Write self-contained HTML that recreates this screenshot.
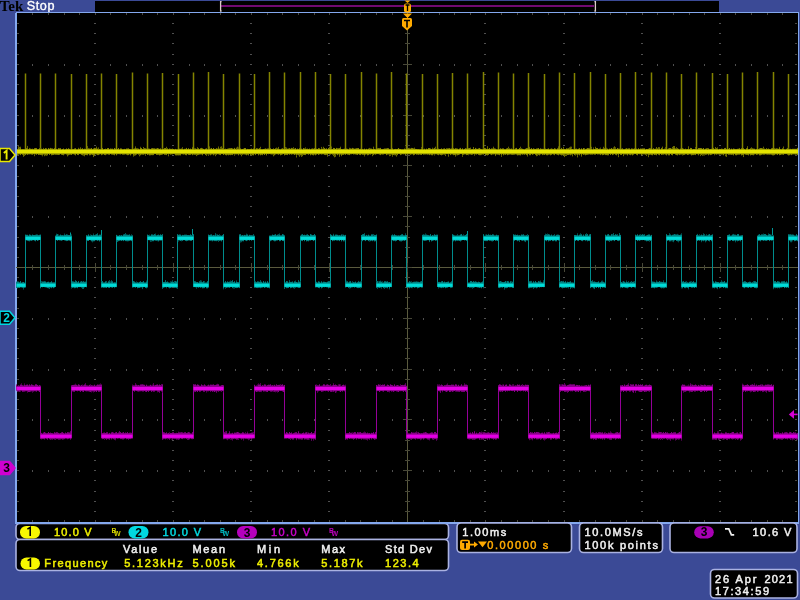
<!DOCTYPE html><html><head><meta charset="utf-8"><style>html,body{margin:0;padding:0;background:#3b4a96;width:800px;height:600px;overflow:hidden}svg{display:block}text{font-family:"Liberation Sans",sans-serif}</style></head><body>
<svg width="800" height="600" viewBox="0 0 800 600" shape-rendering="crispEdges" style="will-change:transform">
<rect x="0" y="0" width="800" height="600" fill="#3b4a96"/>
<rect x="95" y="1" width="624" height="11" fill="#000"/>
<rect x="221" y="5" width="373" height="2" fill="#720a72"/>
<path d="M221.6 1.6 H220.6 V11 H221.6" stroke="#dccccc" stroke-width="1.3" fill="none" shape-rendering="auto"/>
<path d="M594.4 1.6 H595.4 V11 H594.4" stroke="#dccccc" stroke-width="1.3" fill="none" shape-rendering="auto"/>
<text x="-0.3" y="11.3" font-weight="bold" font-size="14.8" fill="#000" textLength="23.5" lengthAdjust="spacingAndGlyphs" style="font-family:'Liberation Serif',serif">Tek</text>
<text x="26.8" y="9.9" font-size="12.6" fill="#fff" stroke="#fff" stroke-width="0.35" textLength="27.6" lengthAdjust="spacing">Stop</text>
<rect x="15" y="12" width="784" height="512" rx="2" fill="#84a8ee"/>
<rect x="16.5" y="13" width="781" height="509" fill="#000"/>
<path d="M94 23h2v1h-2zM94 33h2v1h-2zM94 43h2v1h-2zM94 54h2v1h-2zM94 64h2v1h-2zM94 74h2v1h-2zM94 84h2v1h-2zM94 94h2v1h-2zM94 104h2v1h-2zM94 115h2v1h-2zM94 125h2v1h-2zM94 135h2v1h-2zM94 145h2v1h-2zM94 155h2v1h-2zM94 165h2v1h-2zM94 176h2v1h-2zM94 186h2v1h-2zM94 196h2v1h-2zM94 206h2v1h-2zM94 216h2v1h-2zM94 226h2v1h-2zM94 237h2v1h-2zM94 247h2v1h-2zM94 257h2v1h-2zM94 267h2v1h-2zM94 277h2v1h-2zM94 287h2v1h-2zM94 297h2v1h-2zM94 308h2v1h-2zM94 318h2v1h-2zM94 328h2v1h-2zM94 338h2v1h-2zM94 348h2v1h-2zM94 358h2v1h-2zM94 369h2v1h-2zM94 379h2v1h-2zM94 389h2v1h-2zM94 399h2v1h-2zM94 409h2v1h-2zM94 419h2v1h-2zM94 430h2v1h-2zM94 440h2v1h-2zM94 450h2v1h-2zM94 460h2v1h-2zM94 470h2v1h-2zM94 480h2v1h-2zM94 491h2v1h-2zM94 501h2v1h-2zM94 511h2v1h-2zM172 23h2v1h-2zM172 33h2v1h-2zM172 43h2v1h-2zM172 54h2v1h-2zM172 64h2v1h-2zM172 74h2v1h-2zM172 84h2v1h-2zM172 94h2v1h-2zM172 104h2v1h-2zM172 115h2v1h-2zM172 125h2v1h-2zM172 135h2v1h-2zM172 145h2v1h-2zM172 155h2v1h-2zM172 165h2v1h-2zM172 176h2v1h-2zM172 186h2v1h-2zM172 196h2v1h-2zM172 206h2v1h-2zM172 216h2v1h-2zM172 226h2v1h-2zM172 237h2v1h-2zM172 247h2v1h-2zM172 257h2v1h-2zM172 267h2v1h-2zM172 277h2v1h-2zM172 287h2v1h-2zM172 297h2v1h-2zM172 308h2v1h-2zM172 318h2v1h-2zM172 328h2v1h-2zM172 338h2v1h-2zM172 348h2v1h-2zM172 358h2v1h-2zM172 369h2v1h-2zM172 379h2v1h-2zM172 389h2v1h-2zM172 399h2v1h-2zM172 409h2v1h-2zM172 419h2v1h-2zM172 430h2v1h-2zM172 440h2v1h-2zM172 450h2v1h-2zM172 460h2v1h-2zM172 470h2v1h-2zM172 480h2v1h-2zM172 491h2v1h-2zM172 501h2v1h-2zM172 511h2v1h-2zM250 23h2v1h-2zM250 33h2v1h-2zM250 43h2v1h-2zM250 54h2v1h-2zM250 64h2v1h-2zM250 74h2v1h-2zM250 84h2v1h-2zM250 94h2v1h-2zM250 104h2v1h-2zM250 115h2v1h-2zM250 125h2v1h-2zM250 135h2v1h-2zM250 145h2v1h-2zM250 155h2v1h-2zM250 165h2v1h-2zM250 176h2v1h-2zM250 186h2v1h-2zM250 196h2v1h-2zM250 206h2v1h-2zM250 216h2v1h-2zM250 226h2v1h-2zM250 237h2v1h-2zM250 247h2v1h-2zM250 257h2v1h-2zM250 267h2v1h-2zM250 277h2v1h-2zM250 287h2v1h-2zM250 297h2v1h-2zM250 308h2v1h-2zM250 318h2v1h-2zM250 328h2v1h-2zM250 338h2v1h-2zM250 348h2v1h-2zM250 358h2v1h-2zM250 369h2v1h-2zM250 379h2v1h-2zM250 389h2v1h-2zM250 399h2v1h-2zM250 409h2v1h-2zM250 419h2v1h-2zM250 430h2v1h-2zM250 440h2v1h-2zM250 450h2v1h-2zM250 460h2v1h-2zM250 470h2v1h-2zM250 480h2v1h-2zM250 491h2v1h-2zM250 501h2v1h-2zM250 511h2v1h-2zM328 23h2v1h-2zM328 33h2v1h-2zM328 43h2v1h-2zM328 54h2v1h-2zM328 64h2v1h-2zM328 74h2v1h-2zM328 84h2v1h-2zM328 94h2v1h-2zM328 104h2v1h-2zM328 115h2v1h-2zM328 125h2v1h-2zM328 135h2v1h-2zM328 145h2v1h-2zM328 155h2v1h-2zM328 165h2v1h-2zM328 176h2v1h-2zM328 186h2v1h-2zM328 196h2v1h-2zM328 206h2v1h-2zM328 216h2v1h-2zM328 226h2v1h-2zM328 237h2v1h-2zM328 247h2v1h-2zM328 257h2v1h-2zM328 267h2v1h-2zM328 277h2v1h-2zM328 287h2v1h-2zM328 297h2v1h-2zM328 308h2v1h-2zM328 318h2v1h-2zM328 328h2v1h-2zM328 338h2v1h-2zM328 348h2v1h-2zM328 358h2v1h-2zM328 369h2v1h-2zM328 379h2v1h-2zM328 389h2v1h-2zM328 399h2v1h-2zM328 409h2v1h-2zM328 419h2v1h-2zM328 430h2v1h-2zM328 440h2v1h-2zM328 450h2v1h-2zM328 460h2v1h-2zM328 470h2v1h-2zM328 480h2v1h-2zM328 491h2v1h-2zM328 501h2v1h-2zM328 511h2v1h-2zM484 23h2v1h-2zM484 33h2v1h-2zM484 43h2v1h-2zM484 54h2v1h-2zM484 64h2v1h-2zM484 74h2v1h-2zM484 84h2v1h-2zM484 94h2v1h-2zM484 104h2v1h-2zM484 115h2v1h-2zM484 125h2v1h-2zM484 135h2v1h-2zM484 145h2v1h-2zM484 155h2v1h-2zM484 165h2v1h-2zM484 176h2v1h-2zM484 186h2v1h-2zM484 196h2v1h-2zM484 206h2v1h-2zM484 216h2v1h-2zM484 226h2v1h-2zM484 237h2v1h-2zM484 247h2v1h-2zM484 257h2v1h-2zM484 267h2v1h-2zM484 277h2v1h-2zM484 287h2v1h-2zM484 297h2v1h-2zM484 308h2v1h-2zM484 318h2v1h-2zM484 328h2v1h-2zM484 338h2v1h-2zM484 348h2v1h-2zM484 358h2v1h-2zM484 369h2v1h-2zM484 379h2v1h-2zM484 389h2v1h-2zM484 399h2v1h-2zM484 409h2v1h-2zM484 419h2v1h-2zM484 430h2v1h-2zM484 440h2v1h-2zM484 450h2v1h-2zM484 460h2v1h-2zM484 470h2v1h-2zM484 480h2v1h-2zM484 491h2v1h-2zM484 501h2v1h-2zM484 511h2v1h-2zM563 23h2v1h-2zM563 33h2v1h-2zM563 43h2v1h-2zM563 54h2v1h-2zM563 64h2v1h-2zM563 74h2v1h-2zM563 84h2v1h-2zM563 94h2v1h-2zM563 104h2v1h-2zM563 115h2v1h-2zM563 125h2v1h-2zM563 135h2v1h-2zM563 145h2v1h-2zM563 155h2v1h-2zM563 165h2v1h-2zM563 176h2v1h-2zM563 186h2v1h-2zM563 196h2v1h-2zM563 206h2v1h-2zM563 216h2v1h-2zM563 226h2v1h-2zM563 237h2v1h-2zM563 247h2v1h-2zM563 257h2v1h-2zM563 267h2v1h-2zM563 277h2v1h-2zM563 287h2v1h-2zM563 297h2v1h-2zM563 308h2v1h-2zM563 318h2v1h-2zM563 328h2v1h-2zM563 338h2v1h-2zM563 348h2v1h-2zM563 358h2v1h-2zM563 369h2v1h-2zM563 379h2v1h-2zM563 389h2v1h-2zM563 399h2v1h-2zM563 409h2v1h-2zM563 419h2v1h-2zM563 430h2v1h-2zM563 440h2v1h-2zM563 450h2v1h-2zM563 460h2v1h-2zM563 470h2v1h-2zM563 480h2v1h-2zM563 491h2v1h-2zM563 501h2v1h-2zM563 511h2v1h-2zM641 23h2v1h-2zM641 33h2v1h-2zM641 43h2v1h-2zM641 54h2v1h-2zM641 64h2v1h-2zM641 74h2v1h-2zM641 84h2v1h-2zM641 94h2v1h-2zM641 104h2v1h-2zM641 115h2v1h-2zM641 125h2v1h-2zM641 135h2v1h-2zM641 145h2v1h-2zM641 155h2v1h-2zM641 165h2v1h-2zM641 176h2v1h-2zM641 186h2v1h-2zM641 196h2v1h-2zM641 206h2v1h-2zM641 216h2v1h-2zM641 226h2v1h-2zM641 237h2v1h-2zM641 247h2v1h-2zM641 257h2v1h-2zM641 267h2v1h-2zM641 277h2v1h-2zM641 287h2v1h-2zM641 297h2v1h-2zM641 308h2v1h-2zM641 318h2v1h-2zM641 328h2v1h-2zM641 338h2v1h-2zM641 348h2v1h-2zM641 358h2v1h-2zM641 369h2v1h-2zM641 379h2v1h-2zM641 389h2v1h-2zM641 399h2v1h-2zM641 409h2v1h-2zM641 419h2v1h-2zM641 430h2v1h-2zM641 440h2v1h-2zM641 450h2v1h-2zM641 460h2v1h-2zM641 470h2v1h-2zM641 480h2v1h-2zM641 491h2v1h-2zM641 501h2v1h-2zM641 511h2v1h-2zM719 23h2v1h-2zM719 33h2v1h-2zM719 43h2v1h-2zM719 54h2v1h-2zM719 64h2v1h-2zM719 74h2v1h-2zM719 84h2v1h-2zM719 94h2v1h-2zM719 104h2v1h-2zM719 115h2v1h-2zM719 125h2v1h-2zM719 135h2v1h-2zM719 145h2v1h-2zM719 155h2v1h-2zM719 165h2v1h-2zM719 176h2v1h-2zM719 186h2v1h-2zM719 196h2v1h-2zM719 206h2v1h-2zM719 216h2v1h-2zM719 226h2v1h-2zM719 237h2v1h-2zM719 247h2v1h-2zM719 257h2v1h-2zM719 267h2v1h-2zM719 277h2v1h-2zM719 287h2v1h-2zM719 297h2v1h-2zM719 308h2v1h-2zM719 318h2v1h-2zM719 328h2v1h-2zM719 338h2v1h-2zM719 348h2v1h-2zM719 358h2v1h-2zM719 369h2v1h-2zM719 379h2v1h-2zM719 389h2v1h-2zM719 399h2v1h-2zM719 409h2v1h-2zM719 419h2v1h-2zM719 430h2v1h-2zM719 440h2v1h-2zM719 450h2v1h-2zM719 460h2v1h-2zM719 470h2v1h-2zM719 480h2v1h-2zM719 491h2v1h-2zM719 501h2v1h-2zM719 511h2v1h-2zM32 64h1v2h-1zM48 64h1v2h-1zM64 64h1v2h-1zM79 64h1v2h-1zM110 64h1v2h-1zM126 64h1v2h-1zM142 64h1v2h-1zM157 64h1v2h-1zM189 64h1v2h-1zM204 64h1v2h-1zM220 64h1v2h-1zM235 64h1v2h-1zM267 64h1v2h-1zM282 64h1v2h-1zM298 64h1v2h-1zM314 64h1v2h-1zM345 64h1v2h-1zM360 64h1v2h-1zM376 64h1v2h-1zM392 64h1v2h-1zM423 64h1v2h-1zM439 64h1v2h-1zM454 64h1v2h-1zM470 64h1v2h-1zM501 64h1v2h-1zM517 64h1v2h-1zM532 64h1v2h-1zM548 64h1v2h-1zM579 64h1v2h-1zM595 64h1v2h-1zM610 64h1v2h-1zM626 64h1v2h-1zM657 64h1v2h-1zM673 64h1v2h-1zM689 64h1v2h-1zM704 64h1v2h-1zM735 64h1v2h-1zM751 64h1v2h-1zM767 64h1v2h-1zM782 64h1v2h-1zM32 115h1v2h-1zM48 115h1v2h-1zM64 115h1v2h-1zM79 115h1v2h-1zM110 115h1v2h-1zM126 115h1v2h-1zM142 115h1v2h-1zM157 115h1v2h-1zM189 115h1v2h-1zM204 115h1v2h-1zM220 115h1v2h-1zM235 115h1v2h-1zM267 115h1v2h-1zM282 115h1v2h-1zM298 115h1v2h-1zM314 115h1v2h-1zM345 115h1v2h-1zM360 115h1v2h-1zM376 115h1v2h-1zM392 115h1v2h-1zM423 115h1v2h-1zM439 115h1v2h-1zM454 115h1v2h-1zM470 115h1v2h-1zM501 115h1v2h-1zM517 115h1v2h-1zM532 115h1v2h-1zM548 115h1v2h-1zM579 115h1v2h-1zM595 115h1v2h-1zM610 115h1v2h-1zM626 115h1v2h-1zM657 115h1v2h-1zM673 115h1v2h-1zM689 115h1v2h-1zM704 115h1v2h-1zM735 115h1v2h-1zM751 115h1v2h-1zM767 115h1v2h-1zM782 115h1v2h-1zM32 165h1v2h-1zM48 165h1v2h-1zM64 165h1v2h-1zM79 165h1v2h-1zM110 165h1v2h-1zM126 165h1v2h-1zM142 165h1v2h-1zM157 165h1v2h-1zM189 165h1v2h-1zM204 165h1v2h-1zM220 165h1v2h-1zM235 165h1v2h-1zM267 165h1v2h-1zM282 165h1v2h-1zM298 165h1v2h-1zM314 165h1v2h-1zM345 165h1v2h-1zM360 165h1v2h-1zM376 165h1v2h-1zM392 165h1v2h-1zM423 165h1v2h-1zM439 165h1v2h-1zM454 165h1v2h-1zM470 165h1v2h-1zM501 165h1v2h-1zM517 165h1v2h-1zM532 165h1v2h-1zM548 165h1v2h-1zM579 165h1v2h-1zM595 165h1v2h-1zM610 165h1v2h-1zM626 165h1v2h-1zM657 165h1v2h-1zM673 165h1v2h-1zM689 165h1v2h-1zM704 165h1v2h-1zM735 165h1v2h-1zM751 165h1v2h-1zM767 165h1v2h-1zM782 165h1v2h-1zM32 216h1v2h-1zM48 216h1v2h-1zM64 216h1v2h-1zM79 216h1v2h-1zM110 216h1v2h-1zM126 216h1v2h-1zM142 216h1v2h-1zM157 216h1v2h-1zM189 216h1v2h-1zM204 216h1v2h-1zM220 216h1v2h-1zM235 216h1v2h-1zM267 216h1v2h-1zM282 216h1v2h-1zM298 216h1v2h-1zM314 216h1v2h-1zM345 216h1v2h-1zM360 216h1v2h-1zM376 216h1v2h-1zM392 216h1v2h-1zM423 216h1v2h-1zM439 216h1v2h-1zM454 216h1v2h-1zM470 216h1v2h-1zM501 216h1v2h-1zM517 216h1v2h-1zM532 216h1v2h-1zM548 216h1v2h-1zM579 216h1v2h-1zM595 216h1v2h-1zM610 216h1v2h-1zM626 216h1v2h-1zM657 216h1v2h-1zM673 216h1v2h-1zM689 216h1v2h-1zM704 216h1v2h-1zM735 216h1v2h-1zM751 216h1v2h-1zM767 216h1v2h-1zM782 216h1v2h-1zM32 318h1v2h-1zM48 318h1v2h-1zM64 318h1v2h-1zM79 318h1v2h-1zM110 318h1v2h-1zM126 318h1v2h-1zM142 318h1v2h-1zM157 318h1v2h-1zM189 318h1v2h-1zM204 318h1v2h-1zM220 318h1v2h-1zM235 318h1v2h-1zM267 318h1v2h-1zM282 318h1v2h-1zM298 318h1v2h-1zM314 318h1v2h-1zM345 318h1v2h-1zM360 318h1v2h-1zM376 318h1v2h-1zM392 318h1v2h-1zM423 318h1v2h-1zM439 318h1v2h-1zM454 318h1v2h-1zM470 318h1v2h-1zM501 318h1v2h-1zM517 318h1v2h-1zM532 318h1v2h-1zM548 318h1v2h-1zM579 318h1v2h-1zM595 318h1v2h-1zM610 318h1v2h-1zM626 318h1v2h-1zM657 318h1v2h-1zM673 318h1v2h-1zM689 318h1v2h-1zM704 318h1v2h-1zM735 318h1v2h-1zM751 318h1v2h-1zM767 318h1v2h-1zM782 318h1v2h-1zM32 369h1v2h-1zM48 369h1v2h-1zM64 369h1v2h-1zM79 369h1v2h-1zM110 369h1v2h-1zM126 369h1v2h-1zM142 369h1v2h-1zM157 369h1v2h-1zM189 369h1v2h-1zM204 369h1v2h-1zM220 369h1v2h-1zM235 369h1v2h-1zM267 369h1v2h-1zM282 369h1v2h-1zM298 369h1v2h-1zM314 369h1v2h-1zM345 369h1v2h-1zM360 369h1v2h-1zM376 369h1v2h-1zM392 369h1v2h-1zM423 369h1v2h-1zM439 369h1v2h-1zM454 369h1v2h-1zM470 369h1v2h-1zM501 369h1v2h-1zM517 369h1v2h-1zM532 369h1v2h-1zM548 369h1v2h-1zM579 369h1v2h-1zM595 369h1v2h-1zM610 369h1v2h-1zM626 369h1v2h-1zM657 369h1v2h-1zM673 369h1v2h-1zM689 369h1v2h-1zM704 369h1v2h-1zM735 369h1v2h-1zM751 369h1v2h-1zM767 369h1v2h-1zM782 369h1v2h-1zM32 419h1v2h-1zM48 419h1v2h-1zM64 419h1v2h-1zM79 419h1v2h-1zM110 419h1v2h-1zM126 419h1v2h-1zM142 419h1v2h-1zM157 419h1v2h-1zM189 419h1v2h-1zM204 419h1v2h-1zM220 419h1v2h-1zM235 419h1v2h-1zM267 419h1v2h-1zM282 419h1v2h-1zM298 419h1v2h-1zM314 419h1v2h-1zM345 419h1v2h-1zM360 419h1v2h-1zM376 419h1v2h-1zM392 419h1v2h-1zM423 419h1v2h-1zM439 419h1v2h-1zM454 419h1v2h-1zM470 419h1v2h-1zM501 419h1v2h-1zM517 419h1v2h-1zM532 419h1v2h-1zM548 419h1v2h-1zM579 419h1v2h-1zM595 419h1v2h-1zM610 419h1v2h-1zM626 419h1v2h-1zM657 419h1v2h-1zM673 419h1v2h-1zM689 419h1v2h-1zM704 419h1v2h-1zM735 419h1v2h-1zM751 419h1v2h-1zM767 419h1v2h-1zM782 419h1v2h-1zM32 470h1v2h-1zM48 470h1v2h-1zM64 470h1v2h-1zM79 470h1v2h-1zM110 470h1v2h-1zM126 470h1v2h-1zM142 470h1v2h-1zM157 470h1v2h-1zM189 470h1v2h-1zM204 470h1v2h-1zM220 470h1v2h-1zM235 470h1v2h-1zM267 470h1v2h-1zM282 470h1v2h-1zM298 470h1v2h-1zM314 470h1v2h-1zM345 470h1v2h-1zM360 470h1v2h-1zM376 470h1v2h-1zM392 470h1v2h-1zM423 470h1v2h-1zM439 470h1v2h-1zM454 470h1v2h-1zM470 470h1v2h-1zM501 470h1v2h-1zM517 470h1v2h-1zM532 470h1v2h-1zM548 470h1v2h-1zM579 470h1v2h-1zM595 470h1v2h-1zM610 470h1v2h-1zM626 470h1v2h-1zM657 470h1v2h-1zM673 470h1v2h-1zM689 470h1v2h-1zM704 470h1v2h-1zM735 470h1v2h-1zM751 470h1v2h-1zM767 470h1v2h-1zM782 470h1v2h-1z" fill="#505050"/>
<path d="M32 13h1v2h-1zM32 520h1v2h-1zM48 13h1v2h-1zM48 520h1v2h-1zM64 13h1v2h-1zM64 520h1v2h-1zM79 13h1v2h-1zM79 520h1v2h-1zM95 13h1v2h-1zM95 520h1v2h-1zM110 13h1v2h-1zM110 520h1v2h-1zM126 13h1v2h-1zM126 520h1v2h-1zM142 13h1v2h-1zM142 520h1v2h-1zM157 13h1v2h-1zM157 520h1v2h-1zM173 13h1v2h-1zM173 520h1v2h-1zM189 13h1v2h-1zM189 520h1v2h-1zM204 13h1v2h-1zM204 520h1v2h-1zM220 13h1v2h-1zM220 520h1v2h-1zM235 13h1v2h-1zM235 520h1v2h-1zM251 13h1v2h-1zM251 520h1v2h-1zM267 13h1v2h-1zM267 520h1v2h-1zM282 13h1v2h-1zM282 520h1v2h-1zM298 13h1v2h-1zM298 520h1v2h-1zM314 13h1v2h-1zM314 520h1v2h-1zM329 13h1v2h-1zM329 520h1v2h-1zM345 13h1v2h-1zM345 520h1v2h-1zM360 13h1v2h-1zM360 520h1v2h-1zM376 13h1v2h-1zM376 520h1v2h-1zM392 13h1v2h-1zM392 520h1v2h-1zM407 13h1v2h-1zM407 520h1v2h-1zM423 13h1v2h-1zM423 520h1v2h-1zM439 13h1v2h-1zM439 520h1v2h-1zM454 13h1v2h-1zM454 520h1v2h-1zM470 13h1v2h-1zM470 520h1v2h-1zM485 13h1v2h-1zM485 520h1v2h-1zM501 13h1v2h-1zM501 520h1v2h-1zM517 13h1v2h-1zM517 520h1v2h-1zM532 13h1v2h-1zM532 520h1v2h-1zM548 13h1v2h-1zM548 520h1v2h-1zM564 13h1v2h-1zM564 520h1v2h-1zM579 13h1v2h-1zM579 520h1v2h-1zM595 13h1v2h-1zM595 520h1v2h-1zM610 13h1v2h-1zM610 520h1v2h-1zM626 13h1v2h-1zM626 520h1v2h-1zM642 13h1v2h-1zM642 520h1v2h-1zM657 13h1v2h-1zM657 520h1v2h-1zM673 13h1v2h-1zM673 520h1v2h-1zM689 13h1v2h-1zM689 520h1v2h-1zM704 13h1v2h-1zM704 520h1v2h-1zM720 13h1v2h-1zM720 520h1v2h-1zM735 13h1v2h-1zM735 520h1v2h-1zM751 13h1v2h-1zM751 520h1v2h-1zM767 13h1v2h-1zM767 520h1v2h-1zM782 13h1v2h-1zM782 520h1v2h-1zM17 23h2v1h-2zM795 23h2v1h-2zM17 33h2v1h-2zM795 33h2v1h-2zM17 43h2v1h-2zM795 43h2v1h-2zM17 54h2v1h-2zM795 54h2v1h-2zM17 64h2v1h-2zM795 64h2v1h-2zM17 74h2v1h-2zM795 74h2v1h-2zM17 84h2v1h-2zM795 84h2v1h-2zM17 94h2v1h-2zM795 94h2v1h-2zM17 104h2v1h-2zM795 104h2v1h-2zM17 115h2v1h-2zM795 115h2v1h-2zM17 125h2v1h-2zM795 125h2v1h-2zM17 135h2v1h-2zM795 135h2v1h-2zM17 145h2v1h-2zM795 145h2v1h-2zM17 155h2v1h-2zM795 155h2v1h-2zM17 165h2v1h-2zM795 165h2v1h-2zM17 176h2v1h-2zM795 176h2v1h-2zM17 186h2v1h-2zM795 186h2v1h-2zM17 196h2v1h-2zM795 196h2v1h-2zM17 206h2v1h-2zM795 206h2v1h-2zM17 216h2v1h-2zM795 216h2v1h-2zM17 226h2v1h-2zM795 226h2v1h-2zM17 237h2v1h-2zM795 237h2v1h-2zM17 247h2v1h-2zM795 247h2v1h-2zM17 257h2v1h-2zM795 257h2v1h-2zM17 267h2v1h-2zM795 267h2v1h-2zM17 277h2v1h-2zM795 277h2v1h-2zM17 287h2v1h-2zM795 287h2v1h-2zM17 297h2v1h-2zM795 297h2v1h-2zM17 308h2v1h-2zM795 308h2v1h-2zM17 318h2v1h-2zM795 318h2v1h-2zM17 328h2v1h-2zM795 328h2v1h-2zM17 338h2v1h-2zM795 338h2v1h-2zM17 348h2v1h-2zM795 348h2v1h-2zM17 358h2v1h-2zM795 358h2v1h-2zM17 369h2v1h-2zM795 369h2v1h-2zM17 379h2v1h-2zM795 379h2v1h-2zM17 389h2v1h-2zM795 389h2v1h-2zM17 399h2v1h-2zM795 399h2v1h-2zM17 409h2v1h-2zM795 409h2v1h-2zM17 419h2v1h-2zM795 419h2v1h-2zM17 430h2v1h-2zM795 430h2v1h-2zM17 440h2v1h-2zM795 440h2v1h-2zM17 450h2v1h-2zM795 450h2v1h-2zM17 460h2v1h-2zM795 460h2v1h-2zM17 470h2v1h-2zM795 470h2v1h-2zM17 480h2v1h-2zM795 480h2v1h-2zM17 491h2v1h-2zM795 491h2v1h-2zM17 501h2v1h-2zM795 501h2v1h-2zM17 511h2v1h-2zM795 511h2v1h-2z" fill="#4a4840"/>
<rect x="407" y="13" width="1" height="509" fill="#5a5a3e"/>
<rect x="16" y="267" width="782" height="1" fill="#5a5a3e"/>
<path d="M405 23h5v1h-5zM405 33h5v1h-5zM405 43h5v1h-5zM405 54h5v1h-5zM403 64h9v1h-9zM405 74h5v1h-5zM405 84h5v1h-5zM405 94h5v1h-5zM405 104h5v1h-5zM403 115h9v1h-9zM405 125h5v1h-5zM405 135h5v1h-5zM405 145h5v1h-5zM405 155h5v1h-5zM403 165h9v1h-9zM405 176h5v1h-5zM405 186h5v1h-5zM405 196h5v1h-5zM405 206h5v1h-5zM403 216h9v1h-9zM405 226h5v1h-5zM405 237h5v1h-5zM405 247h5v1h-5zM405 257h5v1h-5zM403 267h9v1h-9zM405 277h5v1h-5zM405 287h5v1h-5zM405 297h5v1h-5zM405 308h5v1h-5zM403 318h9v1h-9zM405 328h5v1h-5zM405 338h5v1h-5zM405 348h5v1h-5zM405 358h5v1h-5zM403 369h9v1h-9zM405 379h5v1h-5zM405 389h5v1h-5zM405 399h5v1h-5zM405 409h5v1h-5zM403 419h9v1h-9zM405 430h5v1h-5zM405 440h5v1h-5zM405 450h5v1h-5zM405 460h5v1h-5zM403 470h9v1h-9zM405 480h5v1h-5zM405 491h5v1h-5zM405 501h5v1h-5zM405 511h5v1h-5zM32 265h1v5h-1zM48 265h1v5h-1zM64 265h1v5h-1zM79 265h1v5h-1zM95 263h1v9h-1zM110 265h1v5h-1zM126 265h1v5h-1zM142 265h1v5h-1zM157 265h1v5h-1zM173 263h1v9h-1zM189 265h1v5h-1zM204 265h1v5h-1zM220 265h1v5h-1zM235 265h1v5h-1zM251 263h1v9h-1zM267 265h1v5h-1zM282 265h1v5h-1zM298 265h1v5h-1zM314 265h1v5h-1zM329 263h1v9h-1zM345 265h1v5h-1zM360 265h1v5h-1zM376 265h1v5h-1zM392 265h1v5h-1zM407 263h1v9h-1zM423 265h1v5h-1zM439 265h1v5h-1zM454 265h1v5h-1zM470 265h1v5h-1zM485 263h1v9h-1zM501 265h1v5h-1zM517 265h1v5h-1zM532 265h1v5h-1zM548 265h1v5h-1zM564 263h1v9h-1zM579 265h1v5h-1zM595 265h1v5h-1zM610 265h1v5h-1zM626 265h1v5h-1zM642 263h1v9h-1zM657 265h1v5h-1zM673 265h1v5h-1zM689 265h1v5h-1zM704 265h1v5h-1zM720 263h1v9h-1zM735 265h1v5h-1zM751 265h1v5h-1zM767 265h1v5h-1zM782 265h1v5h-1z" fill="#484838"/>
<g shape-rendering="auto">
<path d="M25.5 73.5V152.0M40.5 73.5V152.0M55.5 73.5V152.0M71.5 74.0V152.0M86.5 74.0V152.0M101.5 73.5V152.0M116.5 74.0V152.0M132.5 72.5V152.0M147.5 73.5V152.0M162.5 73.0V152.0M178.5 74.0V152.0M193.5 72.5V152.0M208.5 72.0V152.0M223.5 74.0V152.0M239.5 73.5V152.0M254.5 74.0V152.0M269.5 72.0V152.0M284.5 72.5V152.0M300.5 72.0V152.0M315.5 72.0V152.0M330.5 74.0V152.0M345.5 74.0V152.0M361.5 72.0V152.0M376.5 73.5V152.0M391.5 72.0V152.0M406.5 73.5V152.0M422.5 74.0V152.0M437.5 74.0V152.0M452.5 73.0V152.0M467.5 73.5V152.0M483.5 72.0V152.0M498.5 72.5V152.0M513.5 73.5V152.0M528.5 73.0V152.0M544.5 74.0V152.0M559.5 72.5V152.0M574.5 73.0V152.0M590.5 72.0V152.0M605.5 74.0V152.0M620.5 73.0V152.0M635.5 72.0V152.0M651.5 72.5V152.0M666.5 72.5V152.0M681.5 74.0V152.0M696.5 72.5V152.0M712.5 73.0V152.0M727.5 74.0V152.0M742.5 72.5V152.0M757.5 72.0V152.0M773.5 72.0V152.0M788.5 74.0V152.0" stroke="#848400" stroke-width="1.5" fill="none"/>
<path d="M17.5 149.2V155.3M18.5 147.9V154.6M19.5 148.3V154.4M20.5 148.0V155.1M21.5 149.3V154.1M22.5 149.2V154.8M23.5 149.2V155.0M24.5 149.3V154.6M25.5 147.9V155.1M26.5 148.1V154.3M27.5 148.1V154.9M28.5 149.2V154.4M29.5 149.0V154.4M30.5 148.6V154.3M31.5 148.9V154.6M32.5 148.7V154.8M33.5 149.2V154.2M34.5 148.2V154.3M35.5 148.0V154.3M36.5 148.1V154.8M37.5 149.3V154.1M38.5 149.1V155.0M39.5 148.2V154.8M40.5 149.2V155.0M41.5 148.6V155.2M42.5 149.1V155.3M43.5 149.1V154.6M44.5 148.9V154.8M45.5 148.1V155.4M46.5 148.4V154.8M47.5 149.5V155.3M48.5 148.0V154.0M49.5 148.7V155.0M50.5 147.9V154.1M51.5 148.3V155.3M52.5 148.4V155.1M53.5 148.9V155.0M54.5 148.1V154.6M55.5 148.1V154.8M56.5 148.9V154.8M57.5 149.4V154.9M58.5 148.1V155.0M59.5 148.3V154.8M60.5 148.2V154.1M61.5 149.5V154.8M62.5 149.1V155.0M63.5 148.5V155.3M64.5 149.5V154.4M65.5 149.2V154.2M66.5 148.4V154.6M67.5 149.0V154.9M68.5 148.2V155.3M69.5 148.9V154.8M70.5 149.3V154.7M71.5 148.1V155.0M72.5 149.1V154.2M73.5 149.1V154.3M74.5 148.5V154.7M75.5 148.2V155.4M76.5 149.4V154.0M77.5 149.4V155.0M78.5 149.0V155.1M79.5 148.8V154.0M80.5 149.1V154.2M81.5 148.8V154.9M82.5 148.2V155.3M83.5 149.2V154.7M84.5 148.7V155.0M85.5 148.9V155.0M86.5 148.5V155.1M87.5 148.2V155.3M88.5 148.3V154.2M89.5 148.5V155.3M90.5 148.6V155.2M91.5 148.0V154.6M92.5 149.2V155.0M93.5 148.5V155.0M94.5 147.9V155.4M95.5 148.2V154.4M96.5 148.1V154.5M97.5 148.6V155.1M98.5 149.5V155.1M99.5 149.2V154.5M100.5 149.3V154.2M101.5 148.3V155.2M102.5 148.0V154.7M103.5 149.4V154.3M104.5 149.0V155.0M105.5 148.7V155.2M106.5 149.0V154.5M107.5 148.1V154.3M108.5 148.0V154.7M109.5 149.2V154.8M110.5 148.5V154.0M111.5 148.7V154.6M112.5 148.6V154.7M113.5 149.4V154.8M114.5 148.0V155.3M115.5 148.7V154.2M116.5 148.2V155.3M117.5 149.0V154.3M118.5 148.0V154.2M119.5 149.5V154.3M120.5 148.4V154.5M121.5 148.5V154.1M122.5 149.3V154.7M123.5 149.2V154.7M124.5 148.9V154.6M125.5 149.2V154.3M126.5 148.5V154.7M127.5 148.5V155.2M128.5 148.3V155.1M129.5 149.0V154.4M130.5 149.2V155.4M131.5 149.3V154.3M132.5 149.1V154.1M133.5 148.8V155.1M134.5 148.4V154.0M135.5 148.0V155.4M136.5 148.3V154.7M137.5 149.2V154.1M138.5 148.6V154.7M139.5 149.3V154.3M140.5 147.9V155.3M141.5 148.0V154.6M142.5 149.0V154.7M143.5 148.8V154.8M144.5 148.1V154.3M145.5 148.3V154.6M146.5 148.7V154.0M147.5 148.2V155.0M148.5 148.5V154.6M149.5 148.7V155.4M150.5 149.1V155.3M151.5 148.3V155.1M152.5 148.1V155.2M153.5 148.3V155.1M154.5 148.3V154.1M155.5 148.7V154.0M156.5 148.5V154.9M157.5 148.0V154.9M158.5 148.4V154.8M159.5 148.9V155.4M160.5 148.4V155.1M161.5 149.5V154.9M162.5 149.1V154.6M163.5 148.9V154.1M164.5 148.1V154.8M165.5 148.0V154.8M166.5 148.5V155.1M167.5 148.3V154.1M168.5 149.2V154.7M169.5 148.5V154.1M170.5 148.8V154.7M171.5 148.9V154.4M172.5 148.6V154.4M173.5 149.0V154.0M174.5 149.4V154.2M175.5 148.9V155.3M176.5 149.4V155.4M177.5 149.4V155.3M178.5 148.7V155.4M179.5 148.7V155.3M180.5 148.8V155.4M181.5 148.5V154.2M182.5 148.8V154.3M183.5 149.3V154.6M184.5 148.8V154.4M185.5 148.8V155.1M186.5 147.9V155.3M187.5 149.1V154.2M188.5 148.2V154.9M189.5 149.1V155.0M190.5 148.6V154.9M191.5 149.2V154.3M192.5 148.0V155.2M193.5 149.1V154.6M194.5 149.3V154.8M195.5 148.4V154.8M196.5 148.9V154.7M197.5 148.3V155.2M198.5 148.2V154.9M199.5 149.2V154.6M200.5 148.2V154.5M201.5 147.9V154.5M202.5 148.3V155.3M203.5 148.9V154.1M204.5 149.4V154.1M205.5 148.7V155.0M206.5 148.3V154.1M207.5 149.4V154.4M208.5 148.4V154.4M209.5 148.3V154.5M210.5 148.6V155.3M211.5 148.0V154.6M212.5 149.0V154.4M213.5 148.0V155.3M214.5 148.9V154.5M215.5 148.9V154.5M216.5 148.2V154.8M217.5 148.6V154.2M218.5 148.1V154.4M219.5 148.6V154.8M220.5 148.5V155.1M221.5 148.2V154.1M222.5 148.1V154.1M223.5 149.3V155.0M224.5 149.1V154.3M225.5 148.7V155.1M226.5 149.0V155.4M227.5 148.7V154.8M228.5 148.4V155.3M229.5 148.2V154.9M230.5 148.2V155.2M231.5 148.0V154.9M232.5 148.4V155.1M233.5 148.8V154.2M234.5 147.9V154.5M235.5 148.8V154.4M236.5 149.4V154.4M237.5 148.3V154.3M238.5 148.6V155.3M239.5 149.2V154.3M240.5 148.4V154.8M241.5 149.2V154.4M242.5 149.0V154.8M243.5 148.7V154.4M244.5 148.0V154.5M245.5 148.0V154.7M246.5 149.4V155.3M247.5 148.9V154.7M248.5 149.1V155.4M249.5 149.1V154.0M250.5 148.9V155.1M251.5 148.5V154.2M252.5 149.1V155.2M253.5 148.5V155.4M254.5 148.6V154.2M255.5 149.5V155.1M256.5 148.2V154.1M257.5 148.4V154.1M258.5 148.8V155.3M259.5 148.1V154.4M260.5 148.8V155.3M261.5 149.2V154.8M262.5 149.2V155.2M263.5 149.0V154.1M264.5 148.8V155.0M265.5 148.4V154.1M266.5 148.8V155.4M267.5 148.5V154.0M268.5 148.4V154.3M269.5 148.8V154.0M270.5 148.2V154.3M271.5 149.0V154.5M272.5 149.0V154.5M273.5 148.4V154.4M274.5 149.0V155.3M275.5 148.3V154.5M276.5 149.4V154.2M277.5 148.4V154.3M278.5 148.2V154.8M279.5 149.2V154.2M280.5 149.4V155.3M281.5 148.7V154.9M282.5 148.2V154.5M283.5 148.8V154.0M284.5 148.4V155.4M285.5 148.4V154.9M286.5 149.0V154.9M287.5 148.7V155.1M288.5 148.5V154.2M289.5 148.1V154.8M290.5 148.7V154.2M291.5 147.9V154.7M292.5 148.2V154.3M293.5 148.5V154.3M294.5 148.6V155.0M295.5 148.0V154.5M296.5 149.3V155.4M297.5 148.6V154.8M298.5 149.1V155.3M299.5 148.2V154.8M300.5 149.0V155.3M301.5 148.6V155.2M302.5 149.4V154.0M303.5 148.0V154.9M304.5 148.4V155.0M305.5 148.6V155.1M306.5 148.8V154.2M307.5 148.6V154.2M308.5 149.1V154.8M309.5 148.5V154.1M310.5 149.3V155.3M311.5 148.7V154.6M312.5 148.4V155.1M313.5 148.7V155.4M314.5 148.1V154.6M315.5 148.6V155.3M316.5 148.7V154.6M317.5 149.0V154.1M318.5 148.1V155.0M319.5 148.3V154.4M320.5 149.4V154.2M321.5 148.7V154.6M322.5 148.7V154.3M323.5 148.9V154.3M324.5 148.0V154.9M325.5 148.8V155.1M326.5 148.3V154.8M327.5 149.3V155.1M328.5 148.0V154.0M329.5 149.0V154.5M330.5 148.2V154.6M331.5 148.6V154.1M332.5 149.0V154.7M333.5 147.9V154.7M334.5 148.0V155.3M335.5 148.9V154.7M336.5 147.9V154.3M337.5 149.2V155.2M338.5 148.3V154.4M339.5 148.1V155.0M340.5 148.0V154.6M341.5 149.0V155.0M342.5 149.1V154.9M343.5 148.9V154.9M344.5 148.6V154.3M345.5 148.0V154.9M346.5 148.5V154.1M347.5 148.8V154.7M348.5 149.4V154.8M349.5 149.1V155.1M350.5 148.3V154.3M351.5 148.6V154.3M352.5 147.9V154.0M353.5 148.3V154.5M354.5 148.7V154.3M355.5 148.5V154.5M356.5 148.2V154.7M357.5 148.1V155.0M358.5 148.0V154.2M359.5 149.2V154.9M360.5 148.8V155.1M361.5 148.2V154.3M362.5 149.1V154.8M363.5 149.4V154.8M364.5 148.6V155.2M365.5 149.5V154.7M366.5 148.8V154.4M367.5 149.4V155.3M368.5 148.6V155.1M369.5 149.3V154.4M370.5 148.5V154.7M371.5 148.6V154.1M372.5 149.2V154.4M373.5 148.2V155.1M374.5 148.9V154.3M375.5 149.4V154.7M376.5 147.9V154.2M377.5 148.3V154.1M378.5 148.1V154.2M379.5 149.0V154.6M380.5 147.9V155.1M381.5 149.1V154.4M382.5 149.1V154.6M383.5 148.9V154.5M384.5 148.5V154.1M385.5 148.5V154.1M386.5 148.4V155.2M387.5 148.1V154.6M388.5 148.2V154.5M389.5 149.2V154.5M390.5 149.2V154.3M391.5 149.0V154.6M392.5 148.4V155.2M393.5 149.4V155.0M394.5 149.1V154.0M395.5 148.9V155.3M396.5 149.1V154.5M397.5 148.9V155.1M398.5 148.0V154.0M399.5 148.9V154.1M400.5 149.0V155.1M401.5 149.4V154.6M402.5 149.4V154.2M403.5 149.4V154.4M404.5 148.6V154.2M405.5 149.1V155.0M406.5 149.3V154.3M407.5 148.4V154.6M408.5 148.1V154.3M409.5 148.9V154.3M410.5 148.5V154.8M411.5 147.9V154.4M412.5 148.0V154.3M413.5 148.4V155.3M414.5 149.1V154.9M415.5 148.9V154.1M416.5 149.0V154.7M417.5 149.2V154.6M418.5 149.2V154.9M419.5 149.4V154.5M420.5 149.3V154.8M421.5 148.6V155.0M422.5 148.9V154.1M423.5 149.4V154.7M424.5 148.7V154.5M425.5 149.5V154.5M426.5 148.6V154.4M427.5 149.2V154.7M428.5 148.0V154.5M429.5 148.0V155.1M430.5 148.5V154.6M431.5 149.1V155.2M432.5 148.9V155.3M433.5 148.7V154.4M434.5 147.9V154.2M435.5 148.4V154.3M436.5 148.9V154.3M437.5 148.5V154.8M438.5 148.6V155.2M439.5 149.0V154.5M440.5 149.0V155.0M441.5 148.4V155.3M442.5 149.2V154.9M443.5 148.6V154.5M444.5 148.3V154.7M445.5 149.1V154.5M446.5 149.3V154.1M447.5 148.4V154.2M448.5 148.3V154.7M449.5 148.1V154.1M450.5 148.7V155.1M451.5 148.4V154.4M452.5 149.0V154.5M453.5 148.2V155.2M454.5 148.8V155.0M455.5 148.2V155.1M456.5 148.4V154.3M457.5 148.6V155.3M458.5 149.3V155.0M459.5 148.5V154.6M460.5 147.9V154.1M461.5 149.3V154.1M462.5 148.3V155.4M463.5 149.5V154.8M464.5 148.9V154.4M465.5 148.2V154.4M466.5 148.5V155.1M467.5 148.9V155.0M468.5 148.2V154.2M469.5 148.0V154.4M470.5 149.3V154.5M471.5 149.3V154.9M472.5 149.1V154.7M473.5 149.1V154.1M474.5 149.0V154.1M475.5 147.9V154.3M476.5 148.7V154.6M477.5 148.9V154.1M478.5 148.4V154.9M479.5 148.0V155.2M480.5 148.8V155.2M481.5 149.2V154.0M482.5 149.4V154.5M483.5 149.0V154.7M484.5 148.0V154.0M485.5 148.2V155.1M486.5 148.9V155.1M487.5 148.3V155.4M488.5 148.9V155.0M489.5 148.0V154.0M490.5 149.1V154.5M491.5 148.4V155.1M492.5 148.5V154.5M493.5 148.1V154.5M494.5 148.3V154.3M495.5 148.6V155.0M496.5 149.3V154.5M497.5 149.5V154.7M498.5 149.0V154.8M499.5 149.2V155.2M500.5 148.3V154.2M501.5 148.8V155.3M502.5 148.4V154.2M503.5 148.4V155.3M504.5 149.2V154.5M505.5 149.3V154.9M506.5 148.5V154.3M507.5 148.1V155.2M508.5 148.7V154.8M509.5 148.4V154.6M510.5 148.8V154.5M511.5 148.5V154.8M512.5 149.4V154.9M513.5 148.6V154.8M514.5 149.3V154.7M515.5 148.3V154.4M516.5 147.9V154.6M517.5 149.3V155.4M518.5 149.1V155.2M519.5 148.0V155.2M520.5 148.7V155.4M521.5 148.4V154.4M522.5 148.8V154.8M523.5 149.2V154.4M524.5 149.4V154.8M525.5 148.7V154.3M526.5 148.1V155.1M527.5 148.1V155.1M528.5 149.3V154.1M529.5 148.1V155.2M530.5 148.9V155.2M531.5 148.1V154.1M532.5 149.2V154.9M533.5 148.3V154.3M534.5 148.8V154.0M535.5 149.0V154.9M536.5 148.5V155.0M537.5 148.4V154.7M538.5 148.0V154.9M539.5 149.2V155.4M540.5 148.3V154.5M541.5 148.8V154.2M542.5 148.8V155.1M543.5 148.8V154.7M544.5 148.9V155.0M545.5 148.6V154.4M546.5 149.0V155.2M547.5 148.8V155.3M548.5 148.3V154.8M549.5 149.4V154.6M550.5 148.8V155.3M551.5 148.4V154.9M552.5 148.8V154.2M553.5 149.1V154.6M554.5 148.2V155.2M555.5 148.6V154.1M556.5 149.4V154.5M557.5 148.3V154.9M558.5 148.1V155.3M559.5 148.7V154.5M560.5 149.0V154.9M561.5 147.9V155.4M562.5 148.9V155.2M563.5 148.4V155.4M564.5 148.9V154.9M565.5 149.2V154.5M566.5 148.3V154.1M567.5 148.5V155.0M568.5 148.2V155.0M569.5 149.3V154.7M570.5 148.0V155.3M571.5 148.6V154.7M572.5 149.0V154.7M573.5 149.3V154.1M574.5 149.0V155.1M575.5 148.8V154.1M576.5 148.6V154.6M577.5 149.3V155.2M578.5 148.7V154.6M579.5 148.1V155.3M580.5 149.5V154.2M581.5 148.3V155.0M582.5 149.5V154.2M583.5 148.0V154.9M584.5 149.4V154.6M585.5 149.3V155.3M586.5 148.7V154.9M587.5 148.0V154.8M588.5 148.1V154.6M589.5 148.3V154.4M590.5 148.8V154.7M591.5 148.8V154.6M592.5 149.4V154.7M593.5 148.9V154.3M594.5 149.0V154.7M595.5 148.3V154.7M596.5 148.0V154.0M597.5 148.0V154.5M598.5 148.9V154.4M599.5 148.6V154.4M600.5 148.7V155.1M601.5 149.1V154.4M602.5 148.8V155.2M603.5 149.0V155.0M604.5 148.2V154.5M605.5 148.2V155.1M606.5 149.4V155.1M607.5 148.6V155.3M608.5 149.5V155.3M609.5 148.6V154.0M610.5 148.8V155.0M611.5 148.0V154.1M612.5 148.8V155.1M613.5 148.8V154.6M614.5 148.3V154.1M615.5 148.4V154.8M616.5 149.0V155.3M617.5 148.0V154.3M618.5 148.6V155.2M619.5 148.7V154.0M620.5 148.9V154.9M621.5 148.7V155.0M622.5 148.3V154.1M623.5 149.2V154.8M624.5 149.2V154.5M625.5 148.7V154.5M626.5 148.2V154.5M627.5 148.7V155.4M628.5 148.4V154.3M629.5 148.3V154.8M630.5 149.4V155.2M631.5 148.4V154.6M632.5 148.6V155.4M633.5 148.8V154.7M634.5 148.3V154.1M635.5 148.1V154.0M636.5 148.6V154.8M637.5 149.3V155.3M638.5 148.2V154.1M639.5 149.2V154.3M640.5 148.5V154.2M641.5 148.6V155.3M642.5 148.4V154.5M643.5 148.4V154.4M644.5 148.3V154.4M645.5 149.5V154.8M646.5 149.0V154.4M647.5 149.1V154.4M648.5 148.7V155.2M649.5 148.1V154.9M650.5 148.3V154.7M651.5 148.0V155.1M652.5 149.4V155.3M653.5 148.2V154.3M654.5 148.9V155.0M655.5 148.7V154.8M656.5 149.1V155.3M657.5 148.4V154.1M658.5 149.3V154.8M659.5 149.0V155.2M660.5 149.4V154.0M661.5 147.9V155.0M662.5 148.2V154.7M663.5 149.2V154.7M664.5 148.7V154.3M665.5 148.8V154.7M666.5 148.6V155.4M667.5 149.3V154.4M668.5 148.4V155.3M669.5 148.0V155.3M670.5 148.0V154.0M671.5 148.6V155.0M672.5 148.5V155.3M673.5 148.0V154.0M674.5 148.0V154.0M675.5 148.4V154.7M676.5 148.3V155.1M677.5 148.2V155.4M678.5 148.8V154.5M679.5 149.5V155.1M680.5 148.6V154.7M681.5 148.4V154.6M682.5 148.1V154.2M683.5 148.7V155.1M684.5 149.1V154.9M685.5 148.7V154.4M686.5 149.2V154.3M687.5 149.0V155.0M688.5 148.2V154.8M689.5 149.1V154.3M690.5 147.9V154.5M691.5 148.0V155.4M692.5 149.3V155.1M693.5 149.0V155.1M694.5 149.0V154.8M695.5 148.7V155.1M696.5 148.9V154.1M697.5 149.3V154.3M698.5 148.0V155.3M699.5 148.0V154.2M700.5 148.0V154.3M701.5 148.1V155.0M702.5 148.8V154.5M703.5 148.0V154.1M704.5 149.4V154.4M705.5 148.7V154.8M706.5 148.3V154.7M707.5 149.4V154.3M708.5 148.3V155.3M709.5 149.2V154.5M710.5 149.0V155.1M711.5 148.8V154.8M712.5 148.8V154.3M713.5 147.9V154.0M714.5 148.9V154.1M715.5 148.3V154.3M716.5 148.2V154.7M717.5 148.8V154.3M718.5 149.4V154.4M719.5 148.9V154.7M720.5 149.0V154.5M721.5 148.6V154.6M722.5 148.8V154.5M723.5 149.1V155.3M724.5 148.1V154.2M725.5 147.9V154.4M726.5 149.1V154.8M727.5 149.0V154.1M728.5 148.9V154.8M729.5 148.0V154.7M730.5 149.5V154.7M731.5 148.6V154.9M732.5 149.4V154.7M733.5 148.5V155.4M734.5 148.8V154.1M735.5 149.1V155.2M736.5 149.1V155.3M737.5 148.8V154.8M738.5 148.7V154.7M739.5 148.2V154.7M740.5 149.2V154.3M741.5 148.2V155.4M742.5 148.4V155.1M743.5 148.2V155.1M744.5 149.0V154.3M745.5 149.5V154.7M746.5 148.2V154.9M747.5 148.0V154.9M748.5 149.3V155.4M749.5 149.0V154.3M750.5 148.3V155.4M751.5 149.3V155.0M752.5 148.3V155.1M753.5 148.6V155.3M754.5 148.7V154.5M755.5 149.5V154.2M756.5 149.1V154.9M757.5 148.4V154.7M758.5 149.1V154.3M759.5 148.4V155.3M760.5 148.0V155.3M761.5 148.0V154.9M762.5 148.3V154.5M763.5 148.7V154.7M764.5 148.6V154.7M765.5 149.1V154.3M766.5 149.1V154.5M767.5 148.9V154.7M768.5 148.5V154.6M769.5 149.1V154.7M770.5 149.3V154.6M771.5 148.3V154.8M772.5 148.0V155.3M773.5 148.6V155.4M774.5 149.2V155.1M775.5 148.6V154.4M776.5 148.3V154.4M777.5 148.5V155.0M778.5 148.8V154.1M779.5 148.0V155.2M780.5 149.1V155.0M781.5 149.3V154.6M782.5 148.3V154.6M783.5 148.4V154.9M784.5 149.3V154.1M785.5 149.5V154.1M786.5 148.8V154.1M787.5 148.1V154.7M788.5 149.0V155.4M789.5 149.1V155.2M790.5 148.8V154.6M791.5 149.1V155.1M792.5 148.8V154.5M793.5 148.8V154.4M794.5 148.8V154.4M795.5 148.8V154.7M796.5 148.8V154.5M797.5 147.9V155.1" stroke="#848400" stroke-width="1" fill="none"/><path d="M18.5 147.9v-1.8M19.5 148.3v-1.4M20.5 148.0v-1.3M23.5 155.0v1.8M24.5 154.6v1.3M27.5 148.1v-2.2M29.5 149.0v-1.1M34.5 154.3v1.9M40.5 149.2v-1.3M42.5 155.3v1.0M43.5 149.1v-1.2M44.5 154.8v1.4M46.5 154.8v1.0M67.5 154.9v1.5M78.5 149.0v-1.2M80.5 149.1v-1.8M83.5 154.7v1.0M84.5 155.0v1.3M87.5 148.2v-2.1M93.5 155.0v2.1M96.5 148.1v-1.5M98.5 149.5v-2.0M133.5 155.1v1.5M134.5 154.0v1.8M135.5 148.0v-1.6M137.5 149.2v-1.0M139.5 154.3v2.0M140.5 147.9v-1.1M143.5 148.8v-1.8M145.5 154.6v1.2M162.5 149.1v-1.2M166.5 148.5v-1.7M168.5 154.7v1.6M182.5 148.8v-1.6M192.5 148.0v-1.1M194.5 149.3v-1.1M196.5 154.7v1.4M197.5 148.3v-1.1M206.5 154.1v1.8M208.5 154.4v1.4M209.5 148.3v-1.9M215.5 154.5v1.7M218.5 148.1v-1.6M220.5 148.5v-1.7M221.5 148.2v-1.9M234.5 154.5v1.2M236.5 149.4v-1.8M237.5 148.3v-1.6M238.5 148.6v-1.1M241.5 154.4v1.9M251.5 154.2v1.4M260.5 148.8v-2.0M273.5 154.4v1.9M276.5 149.4v-1.8M278.5 148.2v-1.3M285.5 148.4v-1.4M286.5 149.0v-1.5M293.5 148.5v-1.3M296.5 155.4v2.1M299.5 154.8v2.0M301.5 155.2v1.7M302.5 154.0v2.2M305.5 148.6v-1.2M321.5 148.7v-1.8M323.5 148.9v-2.1M327.5 155.1v1.6M329.5 149.0v-2.1M331.5 148.6v-2.1M333.5 154.7v1.4M334.5 155.3v2.0M335.5 154.7v2.1M337.5 149.2v-1.1M339.5 155.0v1.8M340.5 148.0v-1.3M341.5 155.0v1.2M349.5 149.1v-1.3M364.5 155.2v1.2M369.5 149.3v-1.4M372.5 154.4v1.8M373.5 148.2v-1.5M379.5 149.0v-1.0M389.5 154.5v1.7M390.5 154.3v1.6M392.5 155.2v1.5M394.5 154.0v1.3M396.5 154.5v2.1M409.5 148.9v-1.0M414.5 149.1v-1.5M421.5 148.6v-1.5M432.5 148.9v-1.2M434.5 154.2v1.3M435.5 148.4v-1.7M445.5 154.5v1.6M446.5 149.3v-1.1M448.5 154.7v2.0M455.5 155.1v1.5M456.5 154.3v1.0M462.5 155.4v1.4M468.5 154.2v1.1M470.5 149.3v-1.7M473.5 149.1v-2.1M474.5 154.1v1.6M481.5 154.0v1.1M483.5 149.0v-1.3M487.5 148.3v-2.1M493.5 148.1v-1.4M495.5 155.0v1.1M501.5 155.3v1.5M508.5 148.7v-2.0M520.5 148.7v-2.0M527.5 155.1v1.4M529.5 148.1v-1.2M536.5 155.0v1.2M537.5 154.7v1.1M558.5 148.1v-1.8M563.5 148.4v-1.6M564.5 154.9v2.2M565.5 154.5v1.5M566.5 154.1v1.8M569.5 149.3v-2.0M570.5 148.0v-1.4M571.5 148.6v-1.9M572.5 154.7v1.7M575.5 154.1v1.5M577.5 155.2v2.2M581.5 155.0v1.6M584.5 149.4v-1.3M591.5 148.8v-2.0M593.5 148.9v-1.4M595.5 148.3v-1.5M600.5 148.7v-1.1M603.5 149.0v-2.2M606.5 149.4v-1.7M613.5 148.8v-1.4M614.5 148.3v-2.0M615.5 148.4v-1.1M618.5 155.2v2.0M623.5 154.8v1.4M646.5 154.4v1.6M648.5 155.2v2.0M656.5 149.1v-2.1M658.5 149.3v-2.2M659.5 149.0v-1.8M662.5 148.2v-1.6M665.5 148.8v-1.6M672.5 148.5v-1.6M673.5 148.0v-2.0M674.5 148.0v-2.0M676.5 148.3v-1.1M682.5 154.2v1.3M688.5 148.2v-1.9M695.5 148.7v-1.6M700.5 154.3v1.8M702.5 154.5v1.3M703.5 154.1v1.4M704.5 154.4v1.1M707.5 149.4v-1.4M714.5 154.1v1.2M715.5 148.3v-1.3M717.5 148.8v-1.4M725.5 154.4v1.9M726.5 154.8v2.1M743.5 155.1v2.0M747.5 148.0v-1.8M751.5 149.3v-2.0M763.5 148.7v-2.0M766.5 149.1v-1.1M774.5 149.2v-1.2M779.5 148.0v-1.1M783.5 148.4v-1.9M788.5 149.0v-1.4" stroke="#6a6a00" stroke-width="1" fill="none"/><rect x="17.00" y="149.60" width="781.00" height="3.80" fill="#e4e400"/>
<path d="M25.50 238.0V285.0M40.50 238.0V285.0M55.50 238.0V285.0M71.50 238.0V285.0M86.50 238.0V285.0M101.50 238.0V285.0M116.50 238.0V285.0M132.50 238.0V285.0M147.50 238.0V285.0M162.50 238.0V285.0M177.50 238.0V285.0M193.50 238.0V285.0M208.50 238.0V285.0M223.50 238.0V285.0M239.50 238.0V285.0M254.50 238.0V285.0M269.50 238.0V285.0M284.50 238.0V285.0M300.50 238.0V285.0M315.50 238.0V285.0M330.50 238.0V285.0M345.50 238.0V285.0M361.50 238.0V285.0M376.50 238.0V285.0M391.50 238.0V285.0M406.50 238.0V285.0M422.50 238.0V285.0M437.50 238.0V285.0M452.50 238.0V285.0M467.50 238.0V285.0M483.50 238.0V285.0M498.50 238.0V285.0M513.50 238.0V285.0M528.50 238.0V285.0M544.50 238.0V285.0M559.50 238.0V285.0M574.50 238.0V285.0M590.50 238.0V285.0M605.50 238.0V285.0M620.50 238.0V285.0M635.50 238.0V285.0M651.50 238.0V285.0M666.50 238.0V285.0M681.50 238.0V285.0M696.50 238.0V285.0M712.50 238.0V285.0M727.50 238.0V285.0M742.50 238.0V285.0M757.50 238.0V285.0M773.50 238.0V285.0M788.50 238.0V285.0" stroke="#008c8c" stroke-width="1" fill="none"/>
<path d="M16.5 281.6V288.0M17.5 281.5V288.3M18.5 281.6V287.6M19.5 282.3V288.0M20.5 281.1V287.4M21.5 282.6V287.5M22.5 282.2V287.8M23.5 282.0V288.3M24.5 282.6V287.8M25.5 281.3V287.5" stroke="#008484" stroke-width="1" fill="none"/><path d="M23.5 288.3v1.2" stroke="#006464" stroke-width="1" fill="none"/><rect x="16.50" y="283.65" width="9.00" height="3.20" fill="#00dcd8"/>
<path d="M25.5 234.6V241.1M26.5 234.8V240.4M27.5 234.8V240.8M28.5 235.5V241.1M29.5 234.5V241.3M30.5 234.8V240.7M31.5 235.4V240.9M32.5 234.6V240.4M33.5 235.0V240.2M34.5 235.0V240.7M35.5 234.8V241.3M36.5 234.5V240.1M37.5 234.6V241.0M38.5 235.1V240.4M39.5 234.8V240.0M40.5 234.6V240.2" stroke="#008484" stroke-width="1" fill="none"/><rect x="25.50" y="236.70" width="15.00" height="3.20" fill="#00dcd8"/>
<path d="M40.5 281.3V288.3M41.5 282.4V287.1M42.5 281.5V287.3M43.5 281.5V287.0M44.5 281.3V287.2M45.5 281.5V287.4M46.5 282.3V287.6M47.5 281.9V288.1M48.5 281.7V288.3M49.5 282.3V287.8M50.5 282.1V287.6M51.5 281.3V288.2M52.5 282.4V287.4M53.5 282.3V288.2M54.5 282.3V287.5M55.5 281.5V287.0" stroke="#008484" stroke-width="1" fill="none"/><path d="M41.5 282.4v-1.2M49.5 287.8v1.2" stroke="#006464" stroke-width="1" fill="none"/><rect x="40.50" y="283.65" width="15.00" height="3.20" fill="#00dcd8"/>
<path d="M55.5 235.6V241.2M56.5 234.8V240.1M57.5 234.1V240.8M58.5 235.6V240.1M59.5 235.4V240.4M60.5 234.6V240.5M61.5 235.2V240.8M62.5 235.1V240.3M63.5 235.3V240.0M64.5 234.8V240.4M65.5 234.9V240.7M66.5 234.3V241.1M67.5 234.6V241.0M68.5 235.0V240.5M69.5 235.0V240.7M70.5 234.4V241.2M71.5 235.7V240.4" stroke="#008484" stroke-width="1" fill="none"/><path d="M56.5 234.8v-1.1M58.5 235.6v-1.1M64.5 234.8v-1.2M71.5 235.7v-1.2" stroke="#006464" stroke-width="1" fill="none"/><rect x="55.50" y="236.70" width="16.00" height="3.20" fill="#00dcd8"/>
<path d="M71.5 281.7V287.3M72.5 281.3V287.9M73.5 281.5V287.6M74.5 281.8V288.2M75.5 281.2V288.1M76.5 281.1V287.7M77.5 282.2V288.2M78.5 281.1V287.1M79.5 282.6V287.2M80.5 281.6V287.1M81.5 281.1V287.6M82.5 281.7V287.8M83.5 281.2V287.9M84.5 281.8V287.4M85.5 281.6V287.0M86.5 281.6V287.3" stroke="#008484" stroke-width="1" fill="none"/><path d="M71.5 287.3v1.2M75.5 281.2v-1.0M82.5 287.8v1.1M83.5 287.9v1.1M86.5 281.6v-1.2" stroke="#006464" stroke-width="1" fill="none"/><rect x="71.50" y="283.65" width="15.00" height="3.20" fill="#00dcd8"/>
<path d="M86.5 235.2V241.3M87.5 235.5V240.9M88.5 234.4V241.0M89.5 235.6V240.0M90.5 235.5V240.3M91.5 234.9V241.3M92.5 235.3V241.2M93.5 234.7V241.3M94.5 235.1V241.2M95.5 234.6V240.3M96.5 234.2V240.3M97.5 234.2V240.9M98.5 235.3V240.4M99.5 234.6V241.4M100.5 234.7V240.5M101.5 234.9V240.1" stroke="#008484" stroke-width="1" fill="none"/><path d="M90.5 235.5v-1.0M92.5 241.2v1.1M93.5 234.7v-1.1M97.5 234.2v-1.0" stroke="#006464" stroke-width="1" fill="none"/><rect x="86.50" y="236.70" width="15.00" height="3.20" fill="#00dcd8"/>
<path d="M101.5 282.0V287.7M102.5 281.1V287.5M103.5 282.4V287.8M104.5 282.4V287.7M105.5 281.4V287.7M106.5 282.3V288.0M107.5 282.6V287.2M108.5 281.3V287.8M109.5 281.4V288.0M110.5 282.4V287.2M111.5 281.2V287.5M112.5 281.3V287.8M113.5 282.6V287.1M114.5 282.3V287.1M115.5 282.4V287.2M116.5 282.0V287.2" stroke="#008484" stroke-width="1" fill="none"/><path d="M101.5 282.0v-1.0M106.5 282.3v-1.2M109.5 281.4v-1.2M110.5 282.4v-1.0M111.5 281.2v-1.0M114.5 287.1v1.1" stroke="#006464" stroke-width="1" fill="none"/><rect x="101.50" y="283.65" width="15.00" height="3.20" fill="#00dcd8"/>
<path d="M116.5 234.9V240.5M117.5 235.6V240.9M118.5 235.7V241.2M119.5 235.1V240.8M120.5 235.5V240.5M121.5 235.1V241.0M122.5 235.6V240.4M123.5 234.5V241.1M124.5 234.2V240.3M125.5 234.3V241.1M126.5 234.5V241.2M127.5 234.7V241.3M128.5 234.8V241.2M129.5 234.4V240.9M130.5 235.5V240.6M131.5 235.5V241.1M132.5 235.3V240.5" stroke="#008484" stroke-width="1" fill="none"/><path d="M117.5 240.9v1.1M125.5 234.3v-1.2M131.5 235.5v-1.1" stroke="#006464" stroke-width="1" fill="none"/><rect x="116.50" y="236.70" width="16.00" height="3.20" fill="#00dcd8"/>
<path d="M132.5 282.3V287.6M133.5 281.1V287.3M134.5 281.5V287.2M135.5 282.3V287.7M136.5 282.6V287.0M137.5 282.2V288.3M138.5 282.5V288.0M139.5 281.9V288.0M140.5 281.2V287.5M141.5 282.0V287.4M142.5 281.9V287.9M143.5 281.1V287.2M144.5 282.4V287.0M145.5 282.4V288.0M146.5 281.6V288.3M147.5 282.6V287.6" stroke="#008484" stroke-width="1" fill="none"/><path d="M136.5 282.6v-1.1M142.5 287.9v1.2M146.5 281.6v-1.0" stroke="#006464" stroke-width="1" fill="none"/><rect x="132.50" y="283.65" width="15.00" height="3.20" fill="#00dcd8"/>
<path d="M147.5 234.6V240.8M148.5 235.1V240.2M149.5 235.7V240.3M150.5 235.6V240.7M151.5 234.4V240.5M152.5 234.5V241.2M153.5 234.8V241.2M154.5 234.1V240.4M155.5 234.7V240.7M156.5 235.3V240.8M157.5 234.9V240.1M158.5 234.6V241.4M159.5 235.2V240.6M160.5 234.4V240.6M161.5 234.9V240.6M162.5 235.1V241.4" stroke="#008484" stroke-width="1" fill="none"/><path d="M149.5 235.7v-1.0M150.5 240.7v1.1M151.5 240.5v1.1M155.5 234.7v-1.1M157.5 240.1v1.1M162.5 235.1v-1.1" stroke="#006464" stroke-width="1" fill="none"/><rect x="147.50" y="236.70" width="15.00" height="3.20" fill="#00dcd8"/>
<path d="M162.5 282.5V287.9M163.5 282.0V287.8M164.5 281.9V287.4M165.5 281.2V287.2M166.5 281.9V287.1M167.5 281.5V287.0M168.5 282.3V287.6M169.5 282.6V288.3M170.5 282.4V288.0M171.5 281.6V287.6M172.5 281.4V287.2M173.5 281.9V287.4M174.5 282.3V287.9M175.5 281.1V287.8M176.5 281.5V288.2M177.5 282.6V287.7" stroke="#008484" stroke-width="1" fill="none"/><path d="M162.5 287.9v1.0M165.5 281.2v-1.2M166.5 287.1v1.2M170.5 282.4v-1.0M172.5 281.4v-1.1M174.5 282.3v-1.2M177.5 287.7v1.1" stroke="#006464" stroke-width="1" fill="none"/><rect x="162.50" y="283.65" width="15.00" height="3.20" fill="#00dcd8"/>
<path d="M177.5 234.2V241.2M178.5 234.8V240.4M179.5 234.5V240.5M180.5 234.6V241.0M181.5 235.5V240.1M182.5 234.9V240.9M183.5 235.1V240.2M184.5 234.7V240.2M185.5 234.7V240.9M186.5 234.7V241.2M187.5 235.0V240.9M188.5 235.0V240.5M189.5 235.1V240.5M190.5 234.4V240.9M191.5 235.1V240.9M192.5 235.2V240.1M193.5 234.2V240.4" stroke="#008484" stroke-width="1" fill="none"/><path d="M178.5 240.4v1.1M181.5 240.1v1.2" stroke="#006464" stroke-width="1" fill="none"/><rect x="177.50" y="236.70" width="16.00" height="3.20" fill="#00dcd8"/>
<path d="M193.5 282.5V287.1M194.5 281.2V287.1M195.5 281.4V287.3M196.5 282.1V287.6M197.5 282.0V287.3M198.5 282.6V287.8M199.5 282.1V287.2M200.5 281.4V287.8M201.5 281.7V287.4M202.5 282.1V288.3M203.5 281.2V288.2M204.5 282.4V288.1M205.5 282.5V287.1M206.5 282.4V288.3M207.5 281.2V288.3M208.5 281.6V287.6" stroke="#008484" stroke-width="1" fill="none"/><path d="M196.5 287.6v1.1M199.5 282.1v-1.0M200.5 281.4v-1.1M201.5 281.7v-1.1M204.5 282.4v-1.1" stroke="#006464" stroke-width="1" fill="none"/><rect x="193.50" y="283.65" width="15.00" height="3.20" fill="#00dcd8"/>
<path d="M208.5 234.6V240.2M209.5 235.0V240.7M210.5 234.6V240.8M211.5 234.4V240.1M212.5 235.4V241.3M213.5 235.0V240.7M214.5 235.3V241.1M215.5 234.3V241.1M216.5 235.6V241.2M217.5 234.5V240.8M218.5 235.0V240.7M219.5 235.3V240.9M220.5 235.4V240.7M221.5 235.7V241.4M222.5 235.1V240.2M223.5 234.1V240.2" stroke="#008484" stroke-width="1" fill="none"/><path d="M211.5 240.1v1.0M215.5 234.3v-1.1M216.5 235.6v-1.1M218.5 240.7v1.1M219.5 235.3v-1.0" stroke="#006464" stroke-width="1" fill="none"/><rect x="208.50" y="236.70" width="15.00" height="3.20" fill="#00dcd8"/>
<path d="M223.5 281.3V288.3M224.5 282.4V287.3M225.5 281.2V287.6M226.5 282.3V287.9M227.5 281.4V287.6M228.5 281.9V287.5M229.5 281.6V287.9M230.5 281.7V287.2M231.5 282.1V287.0M232.5 281.1V288.1M233.5 282.1V287.4M234.5 281.3V287.5M235.5 282.6V288.0M236.5 281.5V288.1M237.5 282.1V288.0M238.5 282.2V287.6M239.5 281.9V288.1" stroke="#008484" stroke-width="1" fill="none"/><path d="M223.5 288.3v1.0M225.5 287.6v1.1M230.5 281.7v-1.1M231.5 282.1v-1.1M232.5 281.1v-1.1M233.5 287.4v1.1M234.5 287.5v1.0M236.5 281.5v-1.0" stroke="#006464" stroke-width="1" fill="none"/><rect x="223.50" y="283.65" width="16.00" height="3.20" fill="#00dcd8"/>
<path d="M239.5 234.4V241.3M240.5 234.2V241.3M241.5 235.4V241.1M242.5 235.0V241.2M243.5 235.4V241.3M244.5 234.9V240.1M245.5 235.2V240.6M246.5 234.7V241.1M247.5 234.5V240.5M248.5 235.6V240.1M249.5 234.8V240.6M250.5 235.2V240.0M251.5 235.2V240.7M252.5 235.3V240.1M253.5 235.2V240.2M254.5 235.7V241.2" stroke="#008484" stroke-width="1" fill="none"/><path d="M240.5 241.3v1.2M241.5 241.1v1.1M246.5 234.7v-1.0M253.5 235.2v-1.1" stroke="#006464" stroke-width="1" fill="none"/><rect x="239.50" y="236.70" width="15.00" height="3.20" fill="#00dcd8"/>
<path d="M254.5 281.9V287.7M255.5 281.4V287.7M256.5 282.1V288.0M257.5 281.4V288.1M258.5 281.5V287.9M259.5 281.8V287.8M260.5 281.3V288.2M261.5 281.7V287.8M262.5 282.6V287.6M263.5 281.1V287.2M264.5 282.4V288.0M265.5 281.5V287.4M266.5 282.6V287.3M267.5 281.2V288.0M268.5 282.5V287.9M269.5 282.6V288.3" stroke="#008484" stroke-width="1" fill="none"/><path d="M254.5 281.9v-1.0M260.5 281.3v-1.2" stroke="#006464" stroke-width="1" fill="none"/><rect x="254.50" y="283.65" width="15.00" height="3.20" fill="#00dcd8"/>
<path d="M269.5 235.6V240.7M270.5 235.5V241.2M271.5 235.5V240.6M272.5 234.6V240.2M273.5 235.0V240.7M274.5 234.7V241.3M275.5 234.2V241.2M276.5 235.3V240.6M277.5 234.7V240.5M278.5 235.2V240.0M279.5 234.5V241.2M280.5 235.3V241.1M281.5 235.3V240.1M282.5 234.1V241.0M283.5 234.5V241.1M284.5 235.3V240.7" stroke="#008484" stroke-width="1" fill="none"/><path d="M278.5 235.2v-1.0M279.5 234.5v-1.0" stroke="#006464" stroke-width="1" fill="none"/><rect x="269.50" y="236.70" width="15.00" height="3.20" fill="#00dcd8"/>
<path d="M284.5 282.1V287.8M285.5 282.3V287.3M286.5 281.1V288.2M287.5 281.3V288.1M288.5 282.5V288.0M289.5 281.3V287.0M290.5 281.9V288.2M291.5 281.9V287.9M292.5 281.5V287.5M293.5 282.5V288.2M294.5 281.4V287.6M295.5 281.6V287.7M296.5 282.0V287.3M297.5 282.3V287.5M298.5 281.2V287.9M299.5 281.7V288.0M300.5 282.1V287.4" stroke="#008484" stroke-width="1" fill="none"/><path d="M284.5 287.8v1.2M289.5 281.3v-1.1M294.5 287.6v1.1M295.5 281.6v-1.0M298.5 281.2v-1.2M300.5 282.1v-1.1" stroke="#006464" stroke-width="1" fill="none"/><rect x="284.50" y="283.65" width="16.00" height="3.20" fill="#00dcd8"/>
<path d="M300.5 235.6V241.0M301.5 234.6V240.8M302.5 234.2V241.1M303.5 235.0V240.0M304.5 234.7V241.2M305.5 235.1V240.0M306.5 234.7V241.4M307.5 234.3V241.1M308.5 235.0V241.3M309.5 235.7V240.5M310.5 234.1V240.6M311.5 234.6V240.1M312.5 235.1V240.2M313.5 235.0V241.1M314.5 234.1V240.3M315.5 235.3V240.0" stroke="#008484" stroke-width="1" fill="none"/><rect x="300.50" y="236.70" width="15.00" height="3.20" fill="#00dcd8"/>
<path d="M315.5 281.2V287.4M316.5 281.8V287.3M317.5 282.5V287.4M318.5 281.3V288.0M319.5 281.7V288.2M320.5 282.6V287.1M321.5 281.3V288.3M322.5 282.4V287.7M323.5 281.7V287.1M324.5 281.8V287.3M325.5 282.0V287.0M326.5 282.2V287.3M327.5 281.7V287.4M328.5 281.2V288.3M329.5 281.2V287.3M330.5 282.5V287.8" stroke="#008484" stroke-width="1" fill="none"/><path d="M330.5 282.5v-1.0" stroke="#006464" stroke-width="1" fill="none"/><rect x="315.50" y="283.65" width="15.00" height="3.20" fill="#00dcd8"/>
<path d="M330.5 234.2V240.2M331.5 234.9V240.0M332.5 235.6V241.2M333.5 234.9V240.6M334.5 235.6V240.7M335.5 234.6V240.2M336.5 234.6V240.5M337.5 234.8V240.6M338.5 235.3V240.4M339.5 235.1V241.1M340.5 235.4V240.0M341.5 234.5V241.4M342.5 235.6V240.2M343.5 234.7V241.3M344.5 235.3V240.3M345.5 234.9V240.6" stroke="#008484" stroke-width="1" fill="none"/><path d="M333.5 234.9v-1.1M342.5 235.6v-1.1M344.5 240.3v1.0" stroke="#006464" stroke-width="1" fill="none"/><rect x="330.50" y="236.70" width="15.00" height="3.20" fill="#00dcd8"/>
<path d="M345.5 281.1V287.4M346.5 281.8V287.1M347.5 281.3V287.0M348.5 282.3V287.9M349.5 281.5V287.3M350.5 281.2V288.2M351.5 282.6V287.5M352.5 282.5V287.4M353.5 282.1V287.1M354.5 282.3V287.6M355.5 281.6V287.1M356.5 282.6V287.6M357.5 282.2V288.1M358.5 282.0V288.1M359.5 281.8V288.0M360.5 281.5V287.3M361.5 282.2V287.7" stroke="#008484" stroke-width="1" fill="none"/><path d="M346.5 281.8v-1.1M349.5 287.3v1.2M352.5 282.5v-1.2M358.5 282.0v-1.1M360.5 287.3v1.1M361.5 282.2v-1.1" stroke="#006464" stroke-width="1" fill="none"/><rect x="345.50" y="283.65" width="16.00" height="3.20" fill="#00dcd8"/>
<path d="M361.5 235.0V240.1M362.5 234.3V241.2M363.5 234.1V240.2M364.5 234.2V240.3M365.5 235.6V241.1M366.5 234.9V240.2M367.5 235.5V240.2M368.5 234.7V241.1M369.5 235.5V240.4M370.5 235.7V241.2M371.5 234.4V240.7M372.5 234.4V241.2M373.5 235.4V240.5M374.5 234.9V241.4M375.5 235.0V241.2M376.5 234.5V241.2" stroke="#008484" stroke-width="1" fill="none"/><path d="M361.5 240.1v1.2M364.5 234.2v-1.0M369.5 240.4v1.1M373.5 235.4v-1.2" stroke="#006464" stroke-width="1" fill="none"/><rect x="361.50" y="236.70" width="15.00" height="3.20" fill="#00dcd8"/>
<path d="M376.5 282.2V287.8M377.5 281.1V287.7M378.5 282.5V287.6M379.5 281.3V288.0M380.5 281.9V287.6M381.5 281.7V287.5M382.5 282.5V287.1M383.5 282.4V288.1M384.5 281.3V287.7M385.5 281.3V287.8M386.5 281.6V287.0M387.5 281.3V288.3M388.5 282.2V287.0M389.5 282.0V288.3M390.5 282.6V287.0M391.5 281.3V287.2" stroke="#008484" stroke-width="1" fill="none"/><path d="M376.5 282.2v-1.1M377.5 287.7v1.1M378.5 282.5v-1.1M380.5 281.9v-1.2M381.5 287.5v1.1M382.5 282.5v-1.1M384.5 287.7v1.1M386.5 287.0v1.1M389.5 288.3v1.0M391.5 281.3v-1.1" stroke="#006464" stroke-width="1" fill="none"/><rect x="376.50" y="283.65" width="15.00" height="3.20" fill="#00dcd8"/>
<path d="M391.5 235.3V240.9M392.5 234.5V240.4M393.5 235.2V241.1M394.5 234.3V240.9M395.5 235.1V241.3M396.5 235.3V240.9M397.5 235.5V240.1M398.5 235.3V240.1M399.5 235.5V241.1M400.5 235.1V241.3M401.5 234.4V241.4M402.5 234.2V240.9M403.5 235.2V240.5M404.5 235.3V240.9M405.5 234.5V240.3M406.5 235.0V241.2" stroke="#008484" stroke-width="1" fill="none"/><path d="M405.5 234.5v-1.1" stroke="#006464" stroke-width="1" fill="none"/><rect x="391.50" y="236.70" width="15.00" height="3.20" fill="#00dcd8"/>
<path d="M406.5 281.8V287.8M407.5 281.6V287.7M408.5 282.3V287.1M409.5 281.2V288.3M410.5 281.7V287.7M411.5 282.4V288.1M412.5 282.2V287.2M413.5 281.8V287.2M414.5 281.7V287.8M415.5 281.7V287.4M416.5 281.5V287.3M417.5 281.7V288.3M418.5 281.8V288.0M419.5 282.1V287.6M420.5 281.5V287.2M421.5 281.1V287.6M422.5 281.7V287.5" stroke="#008484" stroke-width="1" fill="none"/><path d="M411.5 282.4v-1.0M412.5 287.2v1.0M422.5 281.7v-1.0" stroke="#006464" stroke-width="1" fill="none"/><rect x="406.50" y="283.65" width="16.00" height="3.20" fill="#00dcd8"/>
<path d="M422.5 234.8V241.0M423.5 234.4V240.6M424.5 234.7V240.9M425.5 234.6V240.8M426.5 234.6V240.6M427.5 234.9V240.2M428.5 235.1V240.2M429.5 235.4V241.0M430.5 234.1V240.1M431.5 235.7V241.4M432.5 235.0V240.9M433.5 235.4V240.5M434.5 234.3V240.2M435.5 234.9V240.8M436.5 234.7V240.5M437.5 234.7V240.4" stroke="#008484" stroke-width="1" fill="none"/><path d="M425.5 234.6v-1.1M429.5 241.0v1.1" stroke="#006464" stroke-width="1" fill="none"/><rect x="422.50" y="236.70" width="15.00" height="3.20" fill="#00dcd8"/>
<path d="M437.5 281.3V287.0M438.5 281.9V287.4M439.5 281.9V287.5M440.5 282.2V287.8M441.5 281.4V288.1M442.5 281.1V287.7M443.5 282.2V287.9M444.5 281.6V287.3M445.5 282.2V288.2M446.5 282.0V287.8M447.5 281.8V287.7M448.5 281.5V287.1M449.5 282.6V287.0M450.5 282.2V287.0M451.5 281.3V287.0M452.5 282.6V287.4" stroke="#008484" stroke-width="1" fill="none"/><path d="M438.5 287.4v1.0M450.5 287.0v1.1M451.5 287.0v1.0" stroke="#006464" stroke-width="1" fill="none"/><rect x="437.50" y="283.65" width="15.00" height="3.20" fill="#00dcd8"/>
<path d="M452.5 234.2V240.9M453.5 234.8V241.3M454.5 235.3V240.5M455.5 235.5V241.3M456.5 235.4V240.7M457.5 235.3V240.8M458.5 235.4V240.7M459.5 235.3V241.0M460.5 234.5V241.4M461.5 234.1V240.6M462.5 235.4V240.1M463.5 235.5V240.0M464.5 235.4V240.4M465.5 235.0V240.2M466.5 234.1V240.9M467.5 234.8V241.0" stroke="#008484" stroke-width="1" fill="none"/><path d="M457.5 235.3v-1.0M463.5 235.5v-1.1" stroke="#006464" stroke-width="1" fill="none"/><rect x="452.50" y="236.70" width="15.00" height="3.20" fill="#00dcd8"/>
<path d="M467.5 281.4V287.3M468.5 282.5V287.1M469.5 282.4V287.7M470.5 281.1V287.6M471.5 281.1V287.6M472.5 281.9V287.5M473.5 281.2V287.9M474.5 281.8V287.4M475.5 281.4V287.0M476.5 281.8V287.2M477.5 282.2V287.5M478.5 281.7V287.6M479.5 282.0V288.0M480.5 282.5V287.6M481.5 282.2V288.3M482.5 281.5V287.2M483.5 282.5V287.3" stroke="#008484" stroke-width="1" fill="none"/><path d="M472.5 287.5v1.1M483.5 287.3v1.0" stroke="#006464" stroke-width="1" fill="none"/><rect x="467.50" y="283.65" width="16.00" height="3.20" fill="#00dcd8"/>
<path d="M483.5 234.2V241.4M484.5 235.7V241.0M485.5 235.6V241.1M486.5 234.5V241.1M487.5 234.9V241.1M488.5 234.9V240.3M489.5 234.9V240.8M490.5 234.7V240.8M491.5 235.0V241.2M492.5 234.3V241.4M493.5 234.5V241.0M494.5 235.3V240.1M495.5 235.3V240.9M496.5 234.7V240.6M497.5 235.2V241.0M498.5 235.2V240.4" stroke="#008484" stroke-width="1" fill="none"/><path d="M485.5 235.6v-1.0M488.5 234.9v-1.0" stroke="#006464" stroke-width="1" fill="none"/><rect x="483.50" y="236.70" width="15.00" height="3.20" fill="#00dcd8"/>
<path d="M498.5 282.0V287.8M499.5 281.4V288.1M500.5 281.1V287.6M501.5 281.6V287.4M502.5 282.0V287.7M503.5 282.1V287.0M504.5 281.9V288.3M505.5 281.1V288.1M506.5 282.6V288.2M507.5 281.1V287.9M508.5 281.3V287.2M509.5 282.5V287.5M510.5 281.3V287.4M511.5 282.4V287.3M512.5 281.7V287.9M513.5 281.2V288.0" stroke="#008484" stroke-width="1" fill="none"/><path d="M504.5 288.3v1.2M506.5 282.6v-1.1M511.5 282.4v-1.1" stroke="#006464" stroke-width="1" fill="none"/><rect x="498.50" y="283.65" width="15.00" height="3.20" fill="#00dcd8"/>
<path d="M513.5 234.3V240.3M514.5 234.8V240.8M515.5 234.6V240.1M516.5 235.0V240.3M517.5 234.7V241.2M518.5 235.3V240.7M519.5 235.1V240.8M520.5 235.5V240.0M521.5 234.5V240.6M522.5 234.7V240.9M523.5 234.3V240.5M524.5 235.3V241.3M525.5 235.4V241.0M526.5 235.1V240.5M527.5 235.4V240.6M528.5 235.1V241.0" stroke="#008484" stroke-width="1" fill="none"/><path d="M519.5 240.8v1.1M525.5 241.0v1.1M527.5 235.4v-1.2" stroke="#006464" stroke-width="1" fill="none"/><rect x="513.50" y="236.70" width="15.00" height="3.20" fill="#00dcd8"/>
<path d="M528.5 281.1V288.2M529.5 281.3V288.2M530.5 282.0V287.8M531.5 282.1V287.8M532.5 282.5V287.5M533.5 281.3V287.8M534.5 282.3V287.8M535.5 281.1V287.6M536.5 282.2V288.3M537.5 282.3V287.7M538.5 281.1V287.1M539.5 281.5V287.6M540.5 281.6V287.1M541.5 282.2V287.2M542.5 282.5V287.0M543.5 281.4V287.2M544.5 282.5V287.1" stroke="#008484" stroke-width="1" fill="none"/><path d="M530.5 282.0v-1.1M531.5 282.1v-1.2M533.5 287.8v1.1M540.5 281.6v-1.0M543.5 281.4v-1.1" stroke="#006464" stroke-width="1" fill="none"/><rect x="528.50" y="283.65" width="16.00" height="3.20" fill="#00dcd8"/>
<path d="M544.5 235.2V241.1M545.5 234.9V240.5M546.5 235.1V241.2M547.5 234.8V240.2M548.5 234.2V241.4M549.5 234.5V240.8M550.5 235.4V240.9M551.5 234.6V240.1M552.5 235.5V241.1M553.5 235.2V241.1M554.5 235.2V240.5M555.5 235.6V241.3M556.5 234.8V241.3M557.5 234.6V240.1M558.5 234.7V240.6M559.5 235.2V240.9" stroke="#008484" stroke-width="1" fill="none"/><path d="M545.5 234.9v-1.2M546.5 235.1v-1.1M547.5 234.8v-1.2M554.5 235.2v-1.0M559.5 240.9v1.1" stroke="#006464" stroke-width="1" fill="none"/><rect x="544.50" y="236.70" width="15.00" height="3.20" fill="#00dcd8"/>
<path d="M559.5 282.0V287.7M560.5 281.5V287.2M561.5 281.1V287.8M562.5 281.4V288.3M563.5 282.0V288.0M564.5 282.2V287.7M565.5 281.3V287.7M566.5 282.5V287.9M567.5 281.7V287.6M568.5 282.0V287.2M569.5 281.8V287.0M570.5 281.3V287.9M571.5 282.4V287.7M572.5 282.4V287.3M573.5 282.6V287.9M574.5 282.2V288.3" stroke="#008484" stroke-width="1" fill="none"/><path d="M559.5 282.0v-1.0M563.5 282.0v-1.1M568.5 287.2v1.2M570.5 287.9v1.2M572.5 287.3v1.0" stroke="#006464" stroke-width="1" fill="none"/><rect x="559.50" y="283.65" width="15.00" height="3.20" fill="#00dcd8"/>
<path d="M574.5 235.0V241.3M575.5 235.0V241.0M576.5 235.2V240.1M577.5 234.5V240.8M578.5 235.4V241.1M579.5 234.7V240.1M580.5 234.5V240.2M581.5 234.3V240.9M582.5 235.6V241.2M583.5 234.6V240.3M584.5 235.7V240.2M585.5 234.2V240.0M586.5 234.5V240.4M587.5 234.1V241.3M588.5 235.6V241.0M589.5 234.4V241.1M590.5 234.1V240.6" stroke="#008484" stroke-width="1" fill="none"/><path d="M577.5 234.5v-1.1M580.5 234.5v-1.1M585.5 240.0v1.1M586.5 234.5v-1.2" stroke="#006464" stroke-width="1" fill="none"/><rect x="574.50" y="236.70" width="16.00" height="3.20" fill="#00dcd8"/>
<path d="M590.5 281.6V288.1M591.5 281.1V287.3M592.5 281.2V287.4M593.5 281.7V288.3M594.5 281.5V288.0M595.5 281.9V287.3M596.5 282.1V288.0M597.5 282.1V287.0M598.5 281.4V288.1M599.5 282.5V287.3M600.5 282.2V288.1M601.5 281.9V287.0M602.5 281.7V287.7M603.5 281.8V287.4M604.5 282.4V287.6M605.5 281.7V287.9" stroke="#008484" stroke-width="1" fill="none"/><path d="M592.5 281.2v-1.1M594.5 288.0v1.1M600.5 288.1v1.0M601.5 281.9v-1.1M602.5 281.7v-1.1" stroke="#006464" stroke-width="1" fill="none"/><rect x="590.50" y="283.65" width="15.00" height="3.20" fill="#00dcd8"/>
<path d="M605.5 234.7V240.4M606.5 235.4V240.8M607.5 234.4V240.7M608.5 234.1V241.1M609.5 235.3V240.9M610.5 235.5V240.9M611.5 234.2V241.1M612.5 235.2V240.4M613.5 234.3V240.4M614.5 235.1V241.1M615.5 234.2V240.1M616.5 234.7V240.0M617.5 235.2V240.9M618.5 235.6V241.1M619.5 234.2V240.7M620.5 234.9V241.1" stroke="#008484" stroke-width="1" fill="none"/><path d="M609.5 240.9v1.0M612.5 235.2v-1.0M613.5 234.3v-1.2M617.5 235.2v-1.0M619.5 234.2v-1.2" stroke="#006464" stroke-width="1" fill="none"/><rect x="605.50" y="236.70" width="15.00" height="3.20" fill="#00dcd8"/>
<path d="M620.5 281.7V287.2M621.5 282.0V287.4M622.5 282.6V288.0M623.5 281.2V287.3M624.5 281.7V287.5M625.5 282.4V287.9M626.5 281.7V288.1M627.5 282.1V288.3M628.5 282.3V287.6M629.5 282.5V287.1M630.5 281.8V287.2M631.5 282.2V287.9M632.5 281.9V287.2M633.5 281.6V287.1M634.5 282.3V287.5M635.5 281.1V287.2" stroke="#008484" stroke-width="1" fill="none"/><path d="M620.5 287.2v1.0M622.5 282.6v-1.0M626.5 281.7v-1.1M628.5 282.3v-1.1M631.5 282.2v-1.2M634.5 282.3v-1.1M635.5 287.2v1.1" stroke="#006464" stroke-width="1" fill="none"/><rect x="620.50" y="283.65" width="15.00" height="3.20" fill="#00dcd8"/>
<path d="M635.5 234.7V240.2M636.5 235.3V240.0M637.5 234.3V241.1M638.5 235.4V240.4M639.5 234.7V240.9M640.5 235.3V240.3M641.5 234.8V240.1M642.5 234.2V240.2M643.5 234.7V240.0M644.5 235.1V240.4M645.5 235.7V240.6M646.5 235.3V241.3M647.5 234.9V241.1M648.5 234.5V241.1M649.5 234.5V240.5M650.5 235.5V241.0M651.5 234.9V241.1" stroke="#008484" stroke-width="1" fill="none"/><path d="M635.5 240.2v1.1M640.5 235.3v-1.0M644.5 235.1v-1.0M649.5 240.5v1.1" stroke="#006464" stroke-width="1" fill="none"/><rect x="635.50" y="236.70" width="16.00" height="3.20" fill="#00dcd8"/>
<path d="M651.5 281.2V288.0M652.5 281.5V287.9M653.5 281.7V287.9M654.5 281.8V288.3M655.5 282.3V287.7M656.5 281.5V287.8M657.5 281.7V287.5M658.5 281.9V287.1M659.5 281.1V287.1M660.5 281.7V287.8M661.5 281.8V288.3M662.5 282.0V288.1M663.5 281.4V288.3M664.5 282.3V288.1M665.5 282.3V287.6M666.5 281.5V287.8" stroke="#008484" stroke-width="1" fill="none"/><path d="M656.5 281.5v-1.0M663.5 281.4v-1.0" stroke="#006464" stroke-width="1" fill="none"/><rect x="651.50" y="283.65" width="15.00" height="3.20" fill="#00dcd8"/>
<path d="M666.5 234.2V240.1M667.5 235.2V240.9M668.5 235.2V240.4M669.5 234.4V241.4M670.5 234.5V241.3M671.5 235.3V240.1M672.5 234.8V240.5M673.5 234.6V241.1M674.5 234.1V240.5M675.5 234.4V240.0M676.5 234.5V241.0M677.5 234.9V241.3M678.5 234.7V241.3M679.5 235.0V241.1M680.5 234.6V240.1M681.5 234.5V240.1" stroke="#008484" stroke-width="1" fill="none"/><path d="M669.5 234.4v-1.1M671.5 240.1v1.1M672.5 240.5v1.0M673.5 241.1v1.1M677.5 234.9v-1.0M678.5 241.3v1.0M680.5 240.1v1.1M681.5 234.5v-1.1" stroke="#006464" stroke-width="1" fill="none"/><rect x="666.50" y="236.70" width="15.00" height="3.20" fill="#00dcd8"/>
<path d="M681.5 282.0V287.4M682.5 281.6V288.3M683.5 281.2V287.1M684.5 282.1V288.1M685.5 281.7V288.2M686.5 282.4V287.6M687.5 282.3V287.9M688.5 282.6V288.2M689.5 281.8V287.0M690.5 281.5V287.1M691.5 282.4V287.7M692.5 281.9V287.7M693.5 281.2V287.4M694.5 282.3V288.0M695.5 282.3V287.2M696.5 281.3V287.6" stroke="#008484" stroke-width="1" fill="none"/><path d="M681.5 287.4v1.0M686.5 282.4v-1.1M688.5 288.2v1.1M691.5 282.4v-1.1" stroke="#006464" stroke-width="1" fill="none"/><rect x="681.50" y="283.65" width="15.00" height="3.20" fill="#00dcd8"/>
<path d="M696.5 234.9V240.8M697.5 235.0V241.0M698.5 235.3V240.4M699.5 235.4V240.8M700.5 235.3V240.3M701.5 234.6V241.2M702.5 235.2V240.7M703.5 234.4V241.2M704.5 235.2V240.6M705.5 235.5V241.2M706.5 235.4V241.2M707.5 235.3V240.3M708.5 234.6V241.0M709.5 234.1V241.4M710.5 235.3V240.1M711.5 234.9V241.2M712.5 234.4V240.3" stroke="#008484" stroke-width="1" fill="none"/><path d="M697.5 235.0v-1.1M699.5 235.4v-1.0M701.5 241.2v1.0M703.5 234.4v-1.0M704.5 235.2v-1.1M705.5 241.2v1.1M706.5 235.4v-1.1" stroke="#006464" stroke-width="1" fill="none"/><rect x="696.50" y="236.70" width="16.00" height="3.20" fill="#00dcd8"/>
<path d="M712.5 281.7V287.0M713.5 281.4V288.0M714.5 282.6V288.3M715.5 281.4V287.7M716.5 281.8V288.2M717.5 282.0V288.1M718.5 282.1V287.0M719.5 282.6V288.3M720.5 281.9V287.0M721.5 281.4V287.4M722.5 281.7V287.1M723.5 281.8V288.0M724.5 281.1V287.3M725.5 282.5V288.2M726.5 282.4V288.1M727.5 282.4V288.2" stroke="#008484" stroke-width="1" fill="none"/><path d="M712.5 287.0v1.2M717.5 288.1v1.1M721.5 281.4v-1.1" stroke="#006464" stroke-width="1" fill="none"/><rect x="712.50" y="283.65" width="15.00" height="3.20" fill="#00dcd8"/>
<path d="M727.5 235.1V241.1M728.5 234.8V240.5M729.5 234.4V241.1M730.5 235.6V240.8M731.5 235.4V240.0M732.5 234.5V241.0M733.5 235.0V241.1M734.5 234.6V240.6M735.5 234.7V241.2M736.5 235.2V240.7M737.5 234.1V241.3M738.5 234.1V241.0M739.5 235.6V240.6M740.5 235.5V241.3M741.5 235.3V240.1M742.5 235.2V241.3" stroke="#008484" stroke-width="1" fill="none"/><path d="M733.5 235.0v-1.1M735.5 241.2v1.1" stroke="#006464" stroke-width="1" fill="none"/><rect x="727.50" y="236.70" width="15.00" height="3.20" fill="#00dcd8"/>
<path d="M742.5 282.0V287.2M743.5 281.7V287.6M744.5 282.0V288.2M745.5 281.4V287.4M746.5 282.0V287.4M747.5 282.5V287.7M748.5 282.1V288.0M749.5 281.7V287.1M750.5 281.8V287.8M751.5 282.6V287.7M752.5 282.2V287.2M753.5 282.3V287.1M754.5 281.2V288.0M755.5 281.3V288.1M756.5 282.0V288.3M757.5 281.6V287.8" stroke="#008484" stroke-width="1" fill="none"/><path d="M742.5 282.0v-1.1M744.5 282.0v-1.0M753.5 282.3v-1.1" stroke="#006464" stroke-width="1" fill="none"/><rect x="742.50" y="283.65" width="15.00" height="3.20" fill="#00dcd8"/>
<path d="M757.5 235.6V240.5M758.5 234.7V240.9M759.5 234.2V240.0M760.5 235.1V241.3M761.5 234.4V240.3M762.5 234.4V240.4M763.5 234.7V240.9M764.5 234.1V240.5M765.5 234.1V240.8M766.5 234.9V240.9M767.5 235.3V240.4M768.5 234.6V240.1M769.5 234.1V241.1M770.5 234.5V240.3M771.5 235.7V240.7M772.5 235.5V240.5M773.5 235.4V240.1" stroke="#008484" stroke-width="1" fill="none"/><path d="M759.5 240.0v1.0M763.5 234.7v-1.1M768.5 234.6v-1.1M771.5 235.7v-1.0M773.5 240.1v1.2" stroke="#006464" stroke-width="1" fill="none"/><rect x="757.50" y="236.70" width="16.00" height="3.20" fill="#00dcd8"/>
<path d="M773.5 281.1V288.2M774.5 281.2V287.0M775.5 281.1V288.2M776.5 282.1V288.0M777.5 281.2V288.3M778.5 281.4V287.9M779.5 281.7V288.3M780.5 282.6V287.6M781.5 281.5V287.6M782.5 281.4V287.3M783.5 281.3V287.0M784.5 282.0V288.1M785.5 282.2V287.3M786.5 281.4V287.9M787.5 282.5V287.4M788.5 281.4V288.0" stroke="#008484" stroke-width="1" fill="none"/><path d="M773.5 288.2v1.0M774.5 287.0v1.1M784.5 282.0v-1.1" stroke="#006464" stroke-width="1" fill="none"/><rect x="773.50" y="283.65" width="15.00" height="3.20" fill="#00dcd8"/>
<path d="M788.5 234.3V240.7M789.5 234.4V240.7M790.5 234.3V241.2M791.5 234.6V241.1M792.5 234.5V240.2M793.5 234.7V240.2M794.5 235.4V241.2M795.5 235.5V241.0M796.5 234.2V240.6M797.5 235.3V241.2" stroke="#008484" stroke-width="1" fill="none"/><path d="M790.5 241.2v1.0M791.5 241.1v1.2M792.5 240.2v1.1" stroke="#006464" stroke-width="1" fill="none"/><rect x="788.50" y="236.70" width="9.00" height="3.20" fill="#00dcd8"/>
<path d="M70.5 235V232.5M101.5 235V230M192.5 235V229M467.5 235V231M772.5 235V228" stroke="#009898" stroke-width="1" fill="none"/>
<path d="M40.50 388.5V436.2M71.50 388.5V436.2M101.50 388.5V436.2M132.50 388.5V436.2M162.50 388.5V436.2M193.50 388.5V436.2M223.50 388.5V436.2M254.50 388.5V436.2M284.50 388.5V436.2M315.50 388.5V436.2M345.50 388.5V436.2M376.50 388.5V436.2M406.50 388.5V436.2M437.50 388.5V436.2M467.50 388.5V436.2M498.50 388.5V436.2M528.50 388.5V436.2M559.50 388.5V436.2M590.50 388.5V436.2M620.50 388.5V436.2M651.50 388.5V436.2M681.50 388.5V436.2M712.50 388.5V436.2M742.50 388.5V436.2M773.50 388.5V436.2" stroke="#940098" stroke-width="1" fill="none"/>
<path d="M16.5 384.4V390.7M17.5 385.8V391.7M18.5 385.3V391.5M19.5 385.7V391.8M20.5 384.6V390.7M21.5 384.5V390.7M22.5 385.2V391.8M23.5 385.5V391.7M24.5 384.6V391.6M25.5 385.2V391.3M26.5 384.7V391.2M27.5 384.5V391.6M28.5 385.4V392.0M29.5 384.4V392.0M30.5 385.3V391.7M31.5 384.3V391.4M32.5 384.8V391.5M33.5 385.2V391.6M34.5 385.5V391.2M35.5 384.3V391.3M36.5 384.3V391.7M37.5 385.0V390.8M38.5 385.7V391.2M39.5 385.1V392.0M40.5 385.6V390.9" stroke="#880088" stroke-width="1" fill="none"/><path d="M20.5 390.7v1.0M21.5 384.5v-1.1M24.5 384.6v-1.1M27.5 391.6v1.0M32.5 391.5v1.1" stroke="#640064" stroke-width="1" fill="none"/><rect x="16.50" y="386.95" width="24.00" height="3.20" fill="#e400e4"/>
<path d="M40.5 432.7V438.9M41.5 432.9V439.3M42.5 433.5V439.0M43.5 432.6V439.0M44.5 432.0V439.4M45.5 432.7V438.5M46.5 433.2V438.9M47.5 433.1V439.6M48.5 432.0V438.4M49.5 433.0V439.2M50.5 432.6V439.7M51.5 433.0V439.4M52.5 433.1V439.6M53.5 433.4V439.1M54.5 432.2V439.5M55.5 432.7V438.8M56.5 432.2V439.1M57.5 432.3V439.1M58.5 432.9V439.6M59.5 433.3V439.6M60.5 433.0V439.4M61.5 432.4V439.1M62.5 432.1V439.6M63.5 432.9V439.4M64.5 433.4V439.1M65.5 432.5V438.6M66.5 433.1V438.7M67.5 432.2V439.2M68.5 432.3V438.9M69.5 432.5V438.6M70.5 432.1V439.6M71.5 433.2V438.5" stroke="#880088" stroke-width="1" fill="none"/><path d="M55.5 438.8v1.1M70.5 432.1v-1.2" stroke="#640064" stroke-width="1" fill="none"/><rect x="40.50" y="434.65" width="31.00" height="3.20" fill="#e400e4"/>
<path d="M71.5 385.3V390.9M72.5 385.0V391.4M73.5 384.9V391.7M74.5 384.7V391.8M75.5 384.8V390.8M76.5 384.8V391.0M77.5 385.4V391.3M78.5 384.3V390.9M79.5 384.8V391.2M80.5 385.6V391.9M81.5 384.9V391.0M82.5 385.7V391.6M83.5 385.3V392.0M84.5 384.5V390.7M85.5 384.3V391.2M86.5 385.3V391.4M87.5 385.4V391.3M88.5 385.6V391.4M89.5 384.9V391.7M90.5 385.5V392.0M91.5 385.2V391.2M92.5 385.4V391.4M93.5 385.6V391.3M94.5 384.7V391.8M95.5 385.7V391.3M96.5 385.3V392.0M97.5 384.5V390.7M98.5 384.7V391.8M99.5 384.5V391.7M100.5 384.7V391.4M101.5 384.5V391.9" stroke="#880088" stroke-width="1" fill="none"/><path d="M75.5 384.8v-1.1M82.5 385.7v-1.1M85.5 384.3v-1.1M90.5 385.5v-1.1M91.5 391.2v1.2M93.5 391.3v1.1M100.5 384.7v-1.2" stroke="#640064" stroke-width="1" fill="none"/><rect x="71.50" y="386.95" width="30.00" height="3.20" fill="#e400e4"/>
<path d="M101.5 432.3V438.4M102.5 433.1V439.1M103.5 432.7V439.0M104.5 432.5V438.7M105.5 433.0V438.9M106.5 432.3V439.7M107.5 433.1V439.1M108.5 433.5V439.2M109.5 432.9V439.7M110.5 433.5V438.5M111.5 432.4V439.4M112.5 432.1V438.6M113.5 432.6V439.1M114.5 433.1V439.6M115.5 432.4V439.2M116.5 432.0V438.4M117.5 433.1V438.7M118.5 432.5V438.5M119.5 432.1V438.4M120.5 432.1V439.1M121.5 432.9V439.1M122.5 432.6V439.4M123.5 432.1V439.4M124.5 433.1V438.8M125.5 432.5V438.4M126.5 432.9V439.2M127.5 432.1V439.0M128.5 433.1V439.6M129.5 432.7V439.0M130.5 432.6V439.1M131.5 432.8V438.7M132.5 433.1V438.5" stroke="#880088" stroke-width="1" fill="none"/><path d="M104.5 438.7v1.0M107.5 433.1v-1.1M115.5 439.2v1.1M119.5 432.1v-1.1" stroke="#640064" stroke-width="1" fill="none"/><rect x="101.50" y="434.65" width="31.00" height="3.20" fill="#e400e4"/>
<path d="M132.5 385.8V391.6M133.5 385.3V391.0M134.5 385.4V391.7M135.5 384.4V390.7M136.5 384.7V391.0M137.5 385.3V391.4M138.5 385.0V391.6M139.5 385.4V391.4M140.5 384.5V391.3M141.5 384.4V391.2M142.5 384.3V391.5M143.5 384.6V391.5M144.5 384.8V391.0M145.5 385.8V391.7M146.5 384.7V392.0M147.5 385.7V391.1M148.5 385.7V391.9M149.5 385.6V390.9M150.5 384.8V390.7M151.5 385.5V391.9M152.5 385.8V391.2M153.5 384.4V391.7M154.5 385.4V391.6M155.5 385.0V390.8M156.5 384.7V390.8M157.5 384.4V391.2M158.5 385.3V391.8M159.5 384.5V391.8M160.5 385.1V390.8M161.5 385.3V391.5M162.5 384.3V391.6" stroke="#880088" stroke-width="1" fill="none"/><path d="M132.5 385.8v-1.2M135.5 384.4v-1.2M152.5 385.8v-1.2M153.5 384.4v-1.2M157.5 391.2v1.1M159.5 391.8v1.1M161.5 385.3v-1.2M162.5 391.6v1.1" stroke="#640064" stroke-width="1" fill="none"/><rect x="132.50" y="386.95" width="30.00" height="3.20" fill="#e400e4"/>
<path d="M162.5 432.8V439.0M163.5 432.2V439.2M164.5 432.4V438.9M165.5 433.1V439.3M166.5 432.3V438.8M167.5 433.4V438.4M168.5 432.9V438.9M169.5 433.5V439.7M170.5 433.0V438.7M171.5 433.0V438.4M172.5 432.4V439.7M173.5 432.3V438.8M174.5 433.1V438.9M175.5 433.1V438.9M176.5 432.8V439.5M177.5 433.0V439.4M178.5 432.9V439.7M179.5 432.4V439.3M180.5 432.4V438.4M181.5 432.2V438.9M182.5 432.4V439.1M183.5 432.8V438.5M184.5 432.3V438.6M185.5 432.2V438.4M186.5 433.0V438.9M187.5 432.6V438.8M188.5 432.1V439.7M189.5 432.4V439.3M190.5 433.3V438.6M191.5 433.5V439.1M192.5 432.1V439.2M193.5 433.4V439.0" stroke="#880088" stroke-width="1" fill="none"/><path d="M162.5 439.0v1.0M167.5 438.4v1.0M169.5 433.5v-1.2M171.5 438.4v1.1M178.5 432.9v-1.2M187.5 438.8v1.1" stroke="#640064" stroke-width="1" fill="none"/><rect x="162.50" y="434.65" width="31.00" height="3.20" fill="#e400e4"/>
<path d="M193.5 385.1V391.5M194.5 384.5V391.1M195.5 384.3V391.9M196.5 385.3V391.2M197.5 384.4V392.0M198.5 384.8V390.8M199.5 385.6V391.7M200.5 385.8V391.6M201.5 384.4V390.9M202.5 385.2V390.7M203.5 385.4V391.7M204.5 384.4V390.9M205.5 385.3V390.9M206.5 385.8V391.4M207.5 385.4V391.3M208.5 384.7V391.3M209.5 385.4V390.9M210.5 384.6V391.7M211.5 384.7V391.1M212.5 384.7V391.8M213.5 384.4V391.3M214.5 385.1V392.0M215.5 385.0V391.4M216.5 384.5V391.8M217.5 385.0V391.2M218.5 384.3V391.7M219.5 385.7V391.1M220.5 385.7V391.2M221.5 385.2V390.7M222.5 385.0V391.0M223.5 385.3V391.3" stroke="#880088" stroke-width="1" fill="none"/><path d="M193.5 385.1v-1.1M194.5 391.1v1.0M204.5 390.9v1.1M206.5 391.4v1.1M216.5 391.8v1.1M217.5 385.0v-1.2M221.5 390.7v1.2M223.5 391.3v1.1" stroke="#640064" stroke-width="1" fill="none"/><rect x="193.50" y="386.95" width="30.00" height="3.20" fill="#e400e4"/>
<path d="M223.5 432.1V439.2M224.5 432.2V439.1M225.5 432.4V438.9M226.5 432.2V439.3M227.5 433.5V439.1M228.5 433.2V439.2M229.5 432.1V439.1M230.5 433.4V438.5M231.5 433.3V439.5M232.5 432.8V439.4M233.5 433.5V439.0M234.5 432.6V438.8M235.5 432.7V439.0M236.5 432.4V439.6M237.5 432.0V439.5M238.5 432.3V438.6M239.5 432.9V438.4M240.5 433.3V438.7M241.5 433.2V439.5M242.5 432.3V438.9M243.5 432.5V439.4M244.5 433.3V438.7M245.5 433.3V438.9M246.5 433.3V438.9M247.5 432.8V439.1M248.5 433.4V439.2M249.5 433.3V439.4M250.5 433.1V438.8M251.5 432.7V439.1M252.5 432.5V438.7M253.5 433.3V438.5M254.5 432.7V438.4" stroke="#880088" stroke-width="1" fill="none"/><path d="M225.5 432.4v-1.1M226.5 432.2v-1.2M227.5 439.1v1.1M229.5 432.1v-1.0M230.5 438.5v1.1M232.5 439.4v1.1M238.5 438.6v1.2M243.5 439.4v1.1M245.5 433.3v-1.1M247.5 432.8v-1.1M248.5 439.2v1.0M251.5 439.1v1.0M253.5 433.3v-1.2" stroke="#640064" stroke-width="1" fill="none"/><rect x="223.50" y="434.65" width="31.00" height="3.20" fill="#e400e4"/>
<path d="M254.5 384.8V391.0M255.5 385.8V391.4M256.5 385.5V392.0M257.5 385.6V391.7M258.5 384.5V391.5M259.5 384.5V391.8M260.5 384.4V391.8M261.5 385.8V391.1M262.5 385.1V390.7M263.5 385.5V391.6M264.5 384.4V391.4M265.5 384.6V391.4M266.5 385.6V391.8M267.5 385.1V392.0M268.5 384.7V390.9M269.5 384.8V391.0M270.5 384.3V391.6M271.5 385.4V391.7M272.5 385.1V391.4M273.5 385.5V390.7M274.5 384.8V391.8M275.5 385.6V391.2M276.5 385.1V391.6M277.5 385.1V391.4M278.5 384.9V392.0M279.5 384.8V390.8M280.5 385.4V391.0M281.5 384.8V391.0M282.5 384.3V391.4M283.5 385.5V392.0M284.5 385.0V390.8" stroke="#880088" stroke-width="1" fill="none"/><path d="M257.5 385.6v-1.1M258.5 384.5v-1.0M260.5 384.4v-1.2M261.5 391.1v1.0M273.5 390.7v1.1M275.5 391.2v1.1M276.5 385.1v-1.0M277.5 391.4v1.1M280.5 385.4v-1.1" stroke="#640064" stroke-width="1" fill="none"/><rect x="254.50" y="386.95" width="30.00" height="3.20" fill="#e400e4"/>
<path d="M284.5 433.5V438.6M285.5 433.4V438.6M286.5 432.0V438.6M287.5 432.7V438.4M288.5 433.4V438.8M289.5 432.0V439.0M290.5 433.0V438.8M291.5 432.4V438.8M292.5 433.5V439.5M293.5 433.1V439.5M294.5 432.7V438.4M295.5 432.3V438.4M296.5 432.2V439.0M297.5 433.2V438.6M298.5 432.0V439.3M299.5 433.2V439.3M300.5 433.4V439.3M301.5 433.5V439.6M302.5 433.0V439.5M303.5 432.5V438.4M304.5 433.3V439.5M305.5 432.5V439.3M306.5 432.2V439.4M307.5 433.5V439.7M308.5 432.6V439.7M309.5 433.2V438.4M310.5 433.0V438.7M311.5 432.0V439.7M312.5 433.3V439.0M313.5 433.0V439.4M314.5 432.3V439.2M315.5 432.3V439.7" stroke="#880088" stroke-width="1" fill="none"/><path d="M290.5 438.8v1.1M296.5 439.0v1.2M298.5 432.0v-1.0M307.5 433.5v-1.0M309.5 438.4v1.1M311.5 439.7v1.1M313.5 439.4v1.2M314.5 432.3v-1.0" stroke="#640064" stroke-width="1" fill="none"/><rect x="284.50" y="434.65" width="31.00" height="3.20" fill="#e400e4"/>
<path d="M315.5 384.8V391.7M316.5 385.6V390.9M317.5 385.3V391.6M318.5 385.4V391.3M319.5 384.3V390.9M320.5 385.8V390.9M321.5 385.7V391.8M322.5 385.5V391.6M323.5 384.3V391.3M324.5 384.4V391.0M325.5 385.3V391.2M326.5 384.6V390.9M327.5 384.3V391.2M328.5 384.8V391.7M329.5 385.2V390.9M330.5 385.3V391.8M331.5 385.6V391.9M332.5 385.3V390.8M333.5 384.3V391.8M334.5 385.0V391.3M335.5 384.5V391.8M336.5 385.1V391.3M337.5 385.6V391.0M338.5 385.4V391.0M339.5 384.4V391.3M340.5 385.6V392.0M341.5 385.8V391.1M342.5 385.1V391.6M343.5 384.7V390.7M344.5 385.4V391.3M345.5 385.7V390.8" stroke="#880088" stroke-width="1" fill="none"/><path d="M316.5 385.6v-1.1M317.5 391.6v1.1M330.5 385.3v-1.2M332.5 390.8v1.0M333.5 384.3v-1.0M335.5 391.8v1.2M336.5 391.3v1.0M338.5 385.4v-1.0M340.5 385.6v-1.2M345.5 385.7v-1.0" stroke="#640064" stroke-width="1" fill="none"/><rect x="315.50" y="386.95" width="30.00" height="3.20" fill="#e400e4"/>
<path d="M345.5 432.5V439.7M346.5 433.2V439.2M347.5 433.1V439.5M348.5 433.1V438.4M349.5 432.1V439.0M350.5 432.8V438.7M351.5 432.7V438.8M352.5 433.5V438.9M353.5 432.7V439.6M354.5 432.1V439.0M355.5 432.2V438.5M356.5 433.5V439.5M357.5 432.1V438.6M358.5 432.4V439.1M359.5 432.3V439.0M360.5 432.1V438.9M361.5 432.9V439.6M362.5 432.9V438.9M363.5 432.5V439.3M364.5 432.7V439.3M365.5 432.4V439.4M366.5 433.2V439.6M367.5 432.6V439.5M368.5 433.2V439.1M369.5 433.0V439.7M370.5 433.5V438.4M371.5 432.8V439.4M372.5 433.1V438.4M373.5 432.1V438.9M374.5 433.5V439.7M375.5 432.0V439.3M376.5 433.3V439.1" stroke="#880088" stroke-width="1" fill="none"/><path d="M352.5 433.5v-1.1M364.5 432.7v-1.1M367.5 439.5v1.0" stroke="#640064" stroke-width="1" fill="none"/><rect x="345.50" y="434.65" width="31.00" height="3.20" fill="#e400e4"/>
<path d="M376.5 385.0V391.4M377.5 385.5V391.1M378.5 384.3V391.0M379.5 384.7V392.0M380.5 385.4V391.2M381.5 385.0V391.0M382.5 384.6V391.3M383.5 384.8V391.7M384.5 384.3V390.8M385.5 385.8V390.8M386.5 385.6V390.9M387.5 384.6V391.8M388.5 385.0V391.7M389.5 385.7V391.3M390.5 384.3V390.9M391.5 384.9V391.6M392.5 385.2V391.3M393.5 385.8V391.9M394.5 384.4V391.2M395.5 385.8V391.0M396.5 385.3V391.4M397.5 385.0V391.6M398.5 385.4V392.0M399.5 385.8V391.2M400.5 385.5V391.2M401.5 385.0V391.1M402.5 384.9V391.2M403.5 385.1V391.9M404.5 384.7V390.9M405.5 384.3V391.8M406.5 385.8V391.6" stroke="#880088" stroke-width="1" fill="none"/><path d="M376.5 391.4v1.0M380.5 385.4v-1.0M389.5 391.3v1.1M400.5 385.5v-1.2M405.5 384.3v-1.1" stroke="#640064" stroke-width="1" fill="none"/><rect x="376.50" y="386.95" width="30.00" height="3.20" fill="#e400e4"/>
<path d="M406.5 432.5V439.3M407.5 432.4V439.1M408.5 433.3V439.0M409.5 433.4V439.1M410.5 433.4V439.4M411.5 432.1V439.7M412.5 432.6V439.0M413.5 432.6V438.8M414.5 432.7V439.0M415.5 432.4V439.5M416.5 432.4V438.7M417.5 433.4V439.1M418.5 432.3V439.0M419.5 433.0V439.0M420.5 433.3V439.2M421.5 433.1V439.4M422.5 433.2V438.7M423.5 432.6V439.5M424.5 432.5V438.7M425.5 432.1V438.4M426.5 432.5V438.7M427.5 433.1V439.4M428.5 433.4V439.6M429.5 433.3V439.3M430.5 432.8V438.5M431.5 432.4V438.4M432.5 432.5V439.5M433.5 433.3V438.8M434.5 432.0V439.2M435.5 432.0V439.1M436.5 433.1V439.7M437.5 432.2V438.4" stroke="#880088" stroke-width="1" fill="none"/><path d="M416.5 432.4v-1.0M417.5 433.4v-1.1M420.5 439.2v1.0M429.5 439.3v1.1M433.5 438.8v1.2M436.5 439.7v1.0M437.5 438.4v1.1" stroke="#640064" stroke-width="1" fill="none"/><rect x="406.50" y="434.65" width="31.00" height="3.20" fill="#e400e4"/>
<path d="M437.5 385.5V391.2M438.5 385.7V391.1M439.5 385.5V391.4M440.5 385.3V391.9M441.5 384.5V390.7M442.5 385.1V391.1M443.5 385.8V390.7M444.5 385.2V391.0M445.5 385.2V391.5M446.5 384.7V392.0M447.5 384.7V391.4M448.5 385.0V390.7M449.5 385.0V392.0M450.5 385.1V391.9M451.5 384.6V391.3M452.5 384.7V391.9M453.5 384.7V391.4M454.5 385.5V391.0M455.5 384.3V390.7M456.5 384.5V391.6M457.5 385.7V391.6M458.5 384.8V391.7M459.5 385.8V391.8M460.5 385.6V391.2M461.5 384.3V391.8M462.5 385.6V391.9M463.5 385.5V391.9M464.5 384.4V391.9M465.5 384.6V390.9M466.5 384.6V391.8M467.5 385.2V391.6" stroke="#880088" stroke-width="1" fill="none"/><path d="M437.5 385.5v-1.1M438.5 385.7v-1.1M439.5 385.5v-1.1M440.5 391.9v1.1M442.5 391.1v1.1M447.5 384.7v-1.2M455.5 390.7v1.0M464.5 384.4v-1.0" stroke="#640064" stroke-width="1" fill="none"/><rect x="437.50" y="386.95" width="30.00" height="3.20" fill="#e400e4"/>
<path d="M467.5 432.5V438.8M468.5 433.3V439.2M469.5 433.2V439.4M470.5 432.6V439.1M471.5 433.5V439.1M472.5 432.1V439.7M473.5 433.3V439.6M474.5 432.0V439.7M475.5 433.5V439.3M476.5 432.6V438.8M477.5 433.4V438.6M478.5 433.2V438.5M479.5 432.0V439.7M480.5 432.4V438.4M481.5 432.7V439.5M482.5 433.4V439.4M483.5 432.3V439.7M484.5 432.3V438.8M485.5 432.7V439.0M486.5 432.8V438.9M487.5 432.5V439.7M488.5 432.3V438.5M489.5 432.8V439.5M490.5 433.2V438.4M491.5 432.0V438.8M492.5 432.9V438.9M493.5 432.4V439.6M494.5 432.8V439.0M495.5 432.7V439.6M496.5 433.5V439.4M497.5 432.5V438.5M498.5 432.4V438.8" stroke="#880088" stroke-width="1" fill="none"/><path d="M474.5 432.0v-1.0M480.5 438.4v1.1M481.5 432.7v-1.1M482.5 433.4v-1.1M496.5 433.5v-1.1" stroke="#640064" stroke-width="1" fill="none"/><rect x="467.50" y="434.65" width="31.00" height="3.20" fill="#e400e4"/>
<path d="M498.5 385.2V390.9M499.5 384.3V391.5M500.5 384.6V391.8M501.5 385.2V391.4M502.5 385.7V391.9M503.5 384.5V391.1M504.5 385.8V390.9M505.5 384.8V391.8M506.5 384.5V390.9M507.5 385.8V391.3M508.5 385.8V390.9M509.5 384.3V391.1M510.5 384.7V390.7M511.5 385.5V391.0M512.5 385.5V391.1M513.5 385.4V390.8M514.5 385.7V392.0M515.5 385.3V390.7M516.5 385.5V390.8M517.5 384.4V391.9M518.5 384.9V390.8M519.5 384.6V391.0M520.5 385.6V391.3M521.5 384.9V391.0M522.5 385.4V390.7M523.5 385.1V391.4M524.5 385.4V390.9M525.5 384.6V391.7M526.5 384.9V391.0M527.5 384.8V391.8M528.5 384.9V391.6" stroke="#880088" stroke-width="1" fill="none"/><path d="M502.5 385.7v-1.1M512.5 385.5v-1.1M513.5 385.4v-1.1M522.5 385.4v-1.2" stroke="#640064" stroke-width="1" fill="none"/><rect x="498.50" y="386.95" width="30.00" height="3.20" fill="#e400e4"/>
<path d="M528.5 432.3V438.7M529.5 433.0V439.1M530.5 432.1V438.4M531.5 432.5V439.3M532.5 432.4V439.2M533.5 433.1V438.4M534.5 432.0V439.0M535.5 432.6V438.4M536.5 432.0V439.3M537.5 432.1V439.3M538.5 432.2V439.2M539.5 432.7V438.8M540.5 433.3V439.7M541.5 432.8V439.2M542.5 432.6V438.4M543.5 433.4V439.6M544.5 432.3V439.4M545.5 433.5V439.4M546.5 433.2V439.0M547.5 432.4V438.4M548.5 432.1V438.6M549.5 433.1V438.4M550.5 433.2V439.6M551.5 433.4V439.5M552.5 433.3V438.4M553.5 432.8V439.0M554.5 433.4V438.4M555.5 432.9V439.4M556.5 432.6V439.4M557.5 433.2V439.1M558.5 432.0V438.7M559.5 433.1V438.9" stroke="#880088" stroke-width="1" fill="none"/><path d="M529.5 439.1v1.1M530.5 438.4v1.1M532.5 439.2v1.1M544.5 439.4v1.1M546.5 433.2v-1.1M549.5 433.1v-1.2" stroke="#640064" stroke-width="1" fill="none"/><rect x="528.50" y="434.65" width="31.00" height="3.20" fill="#e400e4"/>
<path d="M559.5 384.3V391.2M560.5 385.7V391.8M561.5 385.5V391.0M562.5 384.3V391.2M563.5 384.7V391.0M564.5 384.3V391.8M565.5 384.6V391.8M566.5 385.7V391.6M567.5 385.1V391.7M568.5 384.8V391.9M569.5 384.4V391.0M570.5 385.0V391.3M571.5 384.4V391.2M572.5 384.4V391.4M573.5 384.3V390.7M574.5 384.3V391.1M575.5 385.6V391.9M576.5 384.9V391.5M577.5 385.0V391.4M578.5 385.3V392.0M579.5 385.1V390.8M580.5 385.8V391.3M581.5 385.5V391.0M582.5 385.7V391.0M583.5 385.7V391.8M584.5 385.5V391.7M585.5 385.3V390.7M586.5 385.1V391.3M587.5 385.7V390.9M588.5 384.8V391.1M589.5 385.4V391.3M590.5 384.5V391.0" stroke="#880088" stroke-width="1" fill="none"/><path d="M560.5 385.7v-1.2M561.5 385.5v-1.1M564.5 384.3v-1.2M567.5 391.7v1.1M570.5 385.0v-1.1M580.5 391.3v1.1M585.5 390.7v1.2" stroke="#640064" stroke-width="1" fill="none"/><rect x="559.50" y="386.95" width="31.00" height="3.20" fill="#e400e4"/>
<path d="M590.5 433.2V438.7M591.5 432.7V439.1M592.5 432.3V438.7M593.5 432.5V439.6M594.5 433.0V439.0M595.5 432.7V439.7M596.5 432.2V439.6M597.5 433.0V438.5M598.5 432.2V438.9M599.5 432.2V438.6M600.5 432.3V439.1M601.5 432.6V438.8M602.5 432.3V439.5M603.5 433.4V438.7M604.5 432.5V439.6M605.5 433.5V438.5M606.5 433.0V438.4M607.5 433.4V438.8M608.5 432.5V438.7M609.5 432.8V439.5M610.5 432.5V439.7M611.5 432.6V439.7M612.5 433.1V438.5M613.5 433.3V438.8M614.5 433.3V438.6M615.5 432.7V439.6M616.5 432.3V438.9M617.5 432.1V438.6M618.5 432.8V439.0M619.5 432.4V438.6M620.5 432.2V438.9" stroke="#880088" stroke-width="1" fill="none"/><path d="M605.5 433.5v-1.1M610.5 432.5v-1.1" stroke="#640064" stroke-width="1" fill="none"/><rect x="590.50" y="434.65" width="30.00" height="3.20" fill="#e400e4"/>
<path d="M620.5 385.4V391.5M621.5 385.4V391.6M622.5 385.0V390.9M623.5 385.8V392.0M624.5 384.5V391.0M625.5 385.6V391.2M626.5 385.0V391.1M627.5 384.6V390.9M628.5 384.5V390.9M629.5 385.8V391.6M630.5 385.2V391.5M631.5 384.5V390.7M632.5 384.5V390.9M633.5 384.3V392.0M634.5 385.8V390.8M635.5 384.3V391.7M636.5 385.0V390.9M637.5 385.4V390.7M638.5 384.3V391.3M639.5 385.0V391.8M640.5 384.4V392.0M641.5 384.9V392.0M642.5 384.3V391.4M643.5 385.7V391.2M644.5 385.5V392.0M645.5 384.9V391.7M646.5 384.7V391.7M647.5 385.3V391.1M648.5 385.1V391.3M649.5 384.6V390.9M650.5 385.0V390.9M651.5 385.5V391.3" stroke="#880088" stroke-width="1" fill="none"/><path d="M620.5 391.5v1.0M626.5 391.1v1.1M628.5 384.5v-1.2M630.5 385.2v-1.2M632.5 390.9v1.2M633.5 392.0v1.0M635.5 391.7v1.1M636.5 385.0v-1.0M649.5 390.9v1.0" stroke="#640064" stroke-width="1" fill="none"/><rect x="620.50" y="386.95" width="31.00" height="3.20" fill="#e400e4"/>
<path d="M651.5 433.1V438.5M652.5 432.4V438.8M653.5 433.3V438.8M654.5 433.0V438.8M655.5 432.4V438.9M656.5 432.6V438.9M657.5 433.1V438.5M658.5 432.7V439.5M659.5 432.1V438.9M660.5 432.1V438.7M661.5 433.1V439.1M662.5 432.8V438.6M663.5 432.1V438.8M664.5 433.0V438.8M665.5 432.0V438.4M666.5 432.7V439.2M667.5 432.4V438.9M668.5 433.2V439.3M669.5 433.3V439.4M670.5 433.0V439.6M671.5 432.0V439.1M672.5 432.9V439.3M673.5 432.4V439.4M674.5 432.3V438.6M675.5 432.3V439.4M676.5 433.5V439.7M677.5 433.2V439.2M678.5 432.7V439.5M679.5 432.0V439.3M680.5 432.7V438.6M681.5 432.0V439.5" stroke="#880088" stroke-width="1" fill="none"/><path d="M654.5 433.0v-1.1M658.5 432.7v-1.0M660.5 438.7v1.2M661.5 433.1v-1.1M662.5 438.6v1.2M667.5 438.9v1.2M670.5 439.6v1.1M675.5 439.4v1.1M680.5 432.7v-1.2M681.5 439.5v1.1" stroke="#640064" stroke-width="1" fill="none"/><rect x="651.50" y="434.65" width="30.00" height="3.20" fill="#e400e4"/>
<path d="M681.5 385.5V391.1M682.5 384.4V390.7M683.5 384.7V391.6M684.5 384.7V390.9M685.5 385.6V391.0M686.5 385.7V391.2M687.5 385.6V390.9M688.5 385.7V391.1M689.5 385.7V391.3M690.5 384.3V391.6M691.5 385.6V391.9M692.5 384.6V391.8M693.5 385.2V391.1M694.5 385.1V391.6M695.5 384.5V391.5M696.5 385.2V391.0M697.5 385.8V391.2M698.5 384.9V390.8M699.5 385.6V391.0M700.5 385.7V392.0M701.5 384.8V392.0M702.5 385.0V391.3M703.5 385.3V390.9M704.5 384.6V392.0M705.5 384.9V390.9M706.5 385.6V391.9M707.5 385.2V391.1M708.5 385.2V390.8M709.5 385.2V390.8M710.5 385.5V390.9M711.5 385.5V391.1M712.5 384.4V391.5" stroke="#880088" stroke-width="1" fill="none"/><path d="M683.5 391.6v1.1M684.5 390.9v1.1M685.5 391.0v1.0M688.5 385.7v-1.1M689.5 391.3v1.1M690.5 384.3v-1.0M691.5 385.6v-1.2M700.5 385.7v-1.2" stroke="#640064" stroke-width="1" fill="none"/><rect x="681.50" y="386.95" width="31.00" height="3.20" fill="#e400e4"/>
<path d="M712.5 432.2V439.6M713.5 433.5V439.5M714.5 432.4V439.4M715.5 433.2V439.7M716.5 433.2V439.1M717.5 432.5V438.5M718.5 432.6V439.6M719.5 433.4V439.6M720.5 433.3V439.0M721.5 432.6V439.0M722.5 433.2V438.4M723.5 433.3V439.6M724.5 433.5V439.3M725.5 432.4V439.0M726.5 432.5V439.7M727.5 433.1V439.0M728.5 432.9V439.0M729.5 433.3V439.2M730.5 433.0V438.5M731.5 432.6V439.1M732.5 432.0V439.4M733.5 432.0V439.1M734.5 433.2V438.8M735.5 433.1V438.7M736.5 432.7V439.0M737.5 432.4V439.7M738.5 433.4V439.3M739.5 433.4V438.5M740.5 432.0V439.6M741.5 433.4V439.6M742.5 432.6V438.9" stroke="#880088" stroke-width="1" fill="none"/><path d="M716.5 439.1v1.0M717.5 432.5v-1.1M718.5 432.6v-1.1M722.5 438.4v1.1M727.5 439.0v1.1M735.5 438.7v1.0M739.5 433.4v-1.0M740.5 439.6v1.0" stroke="#640064" stroke-width="1" fill="none"/><rect x="712.50" y="434.65" width="30.00" height="3.20" fill="#e400e4"/>
<path d="M742.5 384.8V392.0M743.5 384.7V391.8M744.5 385.4V390.7M745.5 385.0V391.9M746.5 384.9V391.2M747.5 384.3V391.3M748.5 385.0V391.0M749.5 385.7V391.2M750.5 384.9V391.2M751.5 384.7V391.6M752.5 384.3V391.2M753.5 384.9V392.0M754.5 384.5V391.8M755.5 385.5V391.6M756.5 384.6V390.9M757.5 385.6V391.8M758.5 385.0V391.4M759.5 385.1V390.9M760.5 384.6V391.3M761.5 385.5V391.0M762.5 384.5V391.0M763.5 385.4V391.7M764.5 385.4V391.2M765.5 384.7V390.8M766.5 384.8V391.6M767.5 384.5V390.7M768.5 384.5V391.6M769.5 384.7V391.9M770.5 384.9V391.5M771.5 384.3V391.6M772.5 385.7V391.3M773.5 384.8V391.3" stroke="#880088" stroke-width="1" fill="none"/><path d="M742.5 384.8v-1.1M750.5 391.2v1.1M754.5 384.5v-1.1M761.5 385.5v-1.1M762.5 391.0v1.1M765.5 390.8v1.0M766.5 391.6v1.1" stroke="#640064" stroke-width="1" fill="none"/><rect x="742.50" y="386.95" width="31.00" height="3.20" fill="#e400e4"/>
<path d="M773.5 433.2V439.4M774.5 432.3V438.6M775.5 433.4V438.6M776.5 433.1V439.7M777.5 433.4V439.6M778.5 433.0V438.9M779.5 433.4V439.3M780.5 433.1V439.3M781.5 433.4V439.6M782.5 432.3V439.6M783.5 433.3V439.0M784.5 432.5V438.5M785.5 432.3V439.0M786.5 432.2V438.9M787.5 432.6V439.4M788.5 433.3V438.6M789.5 433.0V438.8M790.5 432.0V438.9M791.5 432.6V438.4M792.5 433.0V439.3M793.5 432.1V439.4M794.5 432.6V438.6M795.5 432.5V439.0M796.5 433.4V439.7M797.5 432.9V439.5" stroke="#880088" stroke-width="1" fill="none"/><path d="M776.5 433.1v-1.1M777.5 433.4v-1.2M778.5 433.0v-1.1M789.5 433.0v-1.1M790.5 438.9v1.1M791.5 438.4v1.1M792.5 439.3v1.0M794.5 438.6v1.1" stroke="#640064" stroke-width="1" fill="none"/><rect x="773.50" y="434.65" width="24.00" height="3.20" fill="#e400e4"/>
</g>
<g shape-rendering="auto"><path d="M793 414.4h4.6" stroke="#d400d4" stroke-width="1.6"/><path d="M788.8 414.4L794 410L794 418.7Z" fill="#d400d4"/></g>
<g shape-rendering="auto"><path d="M0 148.5 H9.5 L15 155.0 L9.5 161.5 H0 Z" fill="#000" stroke="#e8e800" stroke-width="1.5"/><path d="M3.8 153.0 L6.6 150.8 V159.4" stroke="#e8e800" stroke-width="1.9" fill="none"/></g>
<g shape-rendering="auto"><path d="M0 311.2 H9.5 L15 317.7 L9.5 324.2 H0 Z" fill="#000" stroke="#00d8e0" stroke-width="1.5"/><text x="3.2" y="322.0" font-weight="bold" font-size="12" fill="#00d8e0">2</text></g>
<g shape-rendering="auto"><path d="M0 461.5 H9.5 L15 468.0 L9.5 474.5 H0 Z" fill="#d000d0" stroke="#d000d0" stroke-width="1.5"/><text x="3.2" y="472.3" font-weight="bold" font-size="12" fill="#000">3</text></g>
<g shape-rendering="auto">
<path d="M404.5 0.5h6l-3 2.5z" fill="#ffaa00"/>
<rect x="404" y="3.5" width="7" height="9" rx="2" fill="#ffaa00"/>
<path d="M405.5 5h4M407.5 5v6" stroke="#000" stroke-width="1.3"/>
<path d="M403 13.5h9l-4.5 4.5z" fill="#ffaa00"/>
<path d="M402 19.5 Q402 18 403.5 18 H410.5 Q412 18 412 19.5 V26 L407 30.5 L402 26 Z" fill="#ffaa00"/>
<path d="M404 20.5h6M407 20.5v7" stroke="#000" stroke-width="1.6"/>
</g>
<rect x="16.0" y="523.5" width="432.5" height="16.0" rx="4" fill="#000" stroke="#aab2e2" stroke-width="1.6" shape-rendering="auto"/>
<rect x="16.0" y="539.5" width="432.5" height="31.0" rx="4" fill="#000" stroke="#aab2e2" stroke-width="1.6" shape-rendering="auto"/>
<rect x="15" y="522" width="784" height="1.6" fill="#84a8ee"/>
<rect x="457.0" y="523.0" width="114.5" height="29.5" rx="4" fill="#000" stroke="#aab2e2" stroke-width="1.6" shape-rendering="auto"/>
<rect x="579.5" y="523.0" width="83.0" height="29.5" rx="4" fill="#000" stroke="#aab2e2" stroke-width="1.6" shape-rendering="auto"/>
<rect x="670.0" y="523.0" width="127.0" height="29.5" rx="4" fill="#000" stroke="#aab2e2" stroke-width="1.6" shape-rendering="auto"/>
<rect x="710.5" y="569.5" width="87.0" height="28.5" rx="4" fill="#000" stroke="#aab2e2" stroke-width="1.6" shape-rendering="auto"/>
<rect x="20.0" y="526.0" width="20.0" height="12.5" rx="6.2" fill="#f8f800" shape-rendering="auto"/><path d="M27.4 529.2 L30.2 527.4 V535.9" stroke="#000" stroke-width="1.6" fill="none" shape-rendering="auto"/>
<text x="54.0" y="535.8" font-size="11.0" fill="#eeee00" textLength="37.5" lengthAdjust="spacing" stroke="#eeee00" stroke-width="0.50">10.0 V</text>
<rect x="128.5" y="526.0" width="20.0" height="12.5" rx="6.2" fill="#00d8e0" shape-rendering="auto"/><text x="138.5" y="536.5" font-size="12" font-weight="bold" fill="#000" text-anchor="middle">2</text>
<text x="162.5" y="535.8" font-size="11.0" fill="#00d8e0" textLength="38.5" lengthAdjust="spacing" stroke="#00d8e0" stroke-width="0.50">10.0 V</text>
<rect x="237.0" y="526.0" width="20.0" height="12.5" rx="6.2" fill="#b400bc" shape-rendering="auto"/><text x="247.0" y="536.5" font-size="12" font-weight="bold" fill="#000" text-anchor="middle">3</text>
<text x="271.0" y="535.8" font-size="11.0" fill="#c800c8" textLength="39.0" lengthAdjust="spacing" stroke="#c800c8" stroke-width="0.50">10.0 V</text>
<text x="111.5" y="533" font-size="7" font-weight="bold" fill="#d0d000">B</text><text x="114.0" y="536" font-size="7" font-weight="bold" fill="#d0d000">W</text>
<text x="220.0" y="533" font-size="7" font-weight="bold" fill="#00b8c0">B</text><text x="222.5" y="536" font-size="7" font-weight="bold" fill="#00b8c0">W</text>
<text x="329.0" y="533" font-size="7" font-weight="bold" fill="#b800b8">B</text><text x="331.5" y="536" font-size="7" font-weight="bold" fill="#b800b8">W</text>
<text x="123.0" y="553.3" font-size="11.0" fill="#f0f0f0" textLength="34.0" lengthAdjust="spacing" stroke="#f0f0f0" stroke-width="0.50">Value</text>
<text x="192.5" y="553.3" font-size="11.0" fill="#f0f0f0" textLength="32.5" lengthAdjust="spacing" stroke="#f0f0f0" stroke-width="0.50">Mean</text>
<text x="257.0" y="553.3" font-size="11.0" fill="#f0f0f0" textLength="23.0" lengthAdjust="spacing" stroke="#f0f0f0" stroke-width="0.50">Min</text>
<text x="321.3" y="553.3" font-size="11.0" fill="#f0f0f0" textLength="23.7" lengthAdjust="spacing" stroke="#f0f0f0" stroke-width="0.50">Max</text>
<text x="385.0" y="553.3" font-size="11.0" fill="#f0f0f0" textLength="47.0" lengthAdjust="spacing" stroke="#f0f0f0" stroke-width="0.50">Std Dev</text>
<rect x="20.5" y="557.5" width="19.5" height="12.0" rx="6.0" fill="#f8f800" shape-rendering="auto"/><path d="M27.6 560.7 L30.4 558.9 V566.9" stroke="#000" stroke-width="1.6" fill="none" shape-rendering="auto"/>
<text x="44.3" y="567.3" font-size="11.0" fill="#eeee00" textLength="63.0" lengthAdjust="spacing" stroke="#eeee00" stroke-width="0.50">Frequency</text>
<text x="124.2" y="567.3" font-size="11.0" fill="#eeee00" textLength="58.5" lengthAdjust="spacing" stroke="#eeee00" stroke-width="0.50">5.123kHz</text>
<text x="192.5" y="567.3" font-size="11.0" fill="#eeee00" textLength="42.5" lengthAdjust="spacing" stroke="#eeee00" stroke-width="0.50">5.005k</text>
<text x="257.0" y="567.3" font-size="11.0" fill="#eeee00" textLength="41.7" lengthAdjust="spacing" stroke="#eeee00" stroke-width="0.50">4.766k</text>
<text x="321.3" y="567.3" font-size="11.0" fill="#eeee00" textLength="41.2" lengthAdjust="spacing" stroke="#eeee00" stroke-width="0.50">5.187k</text>
<text x="385.0" y="567.3" font-size="11.0" fill="#eeee00" textLength="33.7" lengthAdjust="spacing" stroke="#eeee00" stroke-width="0.50">123.4</text>
<text x="462.2" y="535.7" font-size="11.0" fill="#f0f0f0" textLength="44.0" lengthAdjust="spacing" stroke="#f0f0f0" stroke-width="0.50">1.00ms</text>
<rect x="460" y="539.8" width="10" height="10.1" rx="2" fill="#ffaa00" shape-rendering="auto"/>
<path d="M462.2 542.2h5.8M465.1 542.2v6.3" stroke="#000" stroke-width="1.7" shape-rendering="auto"/>
<path d="M470 544.6h4.6" stroke="#ffaa00" stroke-width="1.8" shape-rendering="auto"/><path d="M474 541.6L478 544.6L474 547.6z" fill="#ffaa00" shape-rendering="auto"/>
<path d="M478 541.6h9l-4.5 5.6z" fill="#ffaa00" shape-rendering="auto"/>
<text x="487.2" y="549.2" font-size="11.0" fill="#ffaa00" textLength="61.0" lengthAdjust="spacing" stroke="#ffaa00" stroke-width="0.50">0.00000 s</text>
<text x="584.4" y="535.7" font-size="11.0" fill="#f0f0f0" textLength="58.0" lengthAdjust="spacing" stroke="#f0f0f0" stroke-width="0.50">10.0MS/s</text>
<text x="584.4" y="549.2" font-size="11.0" fill="#f0f0f0" textLength="73.5" lengthAdjust="spacing" stroke="#f0f0f0" stroke-width="0.50">100k points</text>
<rect x="694.2" y="526.2" width="19.6" height="12.2" rx="6.1" fill="#a800b4" shape-rendering="auto"/><text x="704.0" y="536.4" font-size="12" font-weight="bold" fill="#000" text-anchor="middle">3</text>
<path d="M725 528.8h3.8l2.6 6h2.8" stroke="#f0f0f0" stroke-width="1.7" fill="none" shape-rendering="auto"/>
<text x="752.6" y="535.7" font-size="11.0" fill="#f0f0f0" textLength="38.8" lengthAdjust="spacing" stroke="#f0f0f0" stroke-width="0.50">10.6 V</text>
<text x="715.0" y="582.6" font-size="11.0" fill="#f0f0f0" textLength="41.5" lengthAdjust="spacing" stroke="#f0f0f0" stroke-width="0.50">26 Apr</text>
<text x="764.5" y="582.6" font-size="11.0" fill="#f0f0f0" textLength="28.0" lengthAdjust="spacing" stroke="#f0f0f0" stroke-width="0.50">2021</text>
<text x="715.0" y="595.0" font-size="11.0" fill="#f0f0f0" textLength="54.0" lengthAdjust="spacing" stroke="#f0f0f0" stroke-width="0.50">17:34:59</text>
</svg></body></html>
